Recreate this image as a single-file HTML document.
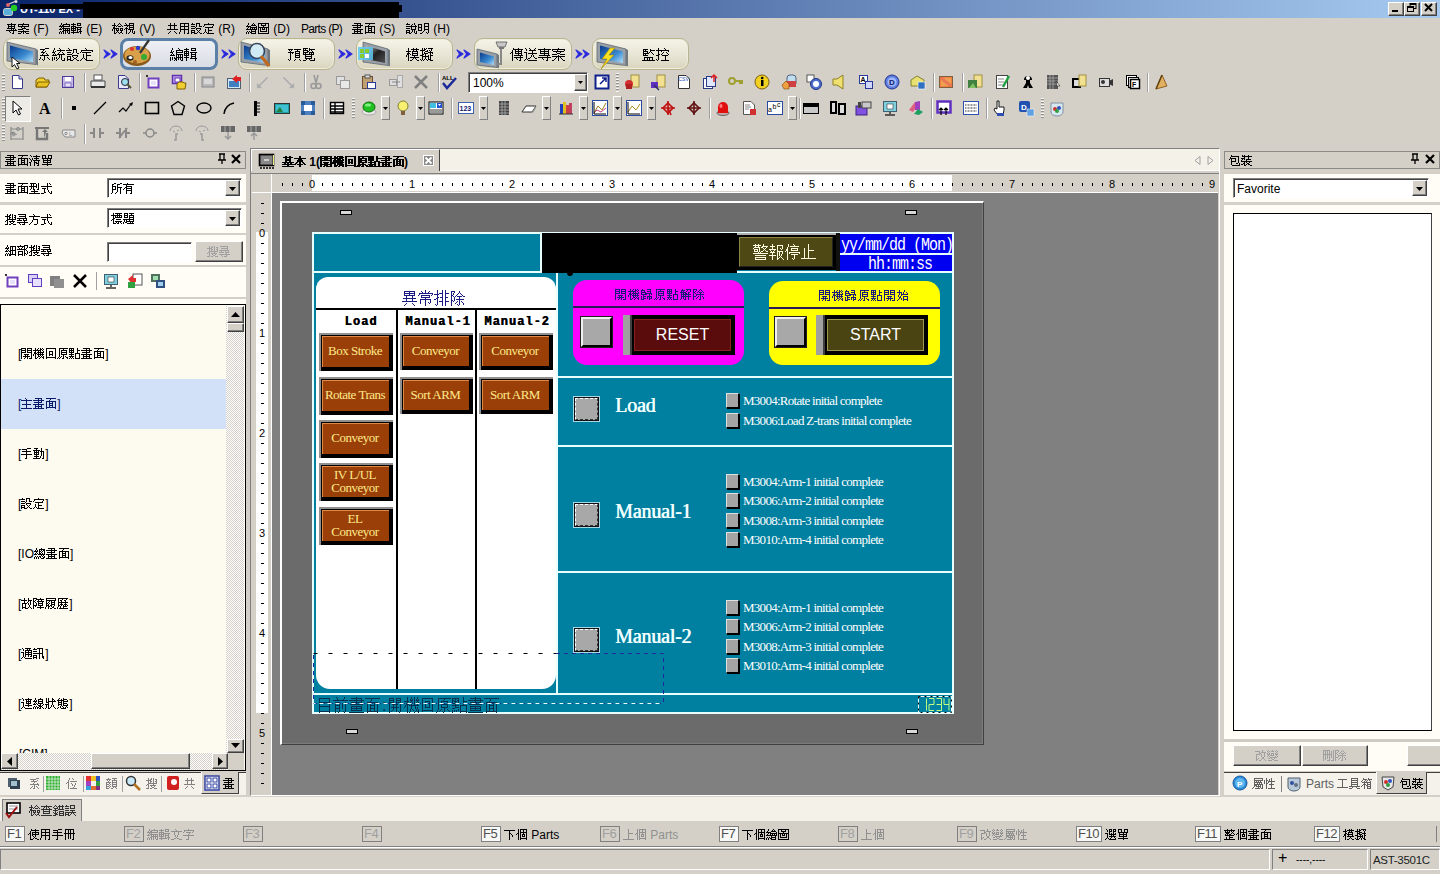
<!DOCTYPE html><html><head><meta charset="utf-8"><title>UT-110 EX</title><style>
html,body{margin:0;padding:0;}
body{width:1440px;height:874px;overflow:hidden;position:relative;background:#d4d0c8;font-family:"Liberation Sans",sans-serif;font-size:12px;color:#000;}
div{position:absolute;box-sizing:border-box;}
.t{white-space:nowrap;line-height:14px;}
svg{position:absolute;overflow:visible;}
svg.g{position:static;display:inline-block;vertical-align:0;fill:currentColor;overflow:visible;}
.h{fill:none;font-size:1px;}
</style></head><body>
<svg style="position:absolute;left:0;top:0;width:0;height:0;overflow:hidden"><defs><path id="g0" d="M5 2h1v1h-1zM1 3h9v1h-9zM2 4h1v1h-1zM5 4h1v1h-1zM8 4h1v1h-1zM2 5h7v1h-7zM2 6h1v1h-1zM5 6h1v1h-1zM8 6h1v1h-1zM1 7h8v1h-8zM5 8h1v1h-1zM7 8h1v1h-1zM9 8h1v1h-1zM0 9h11v1h-11zM3 10h1v1h-1zM4 11h1v1h-1zM7 10h1v2h-1zM6 12h2v1h-2z"/><path id="g1" d="M5 2h1v1h-1zM0 3h11v1h-11zM0 4h1v1h-1zM4 4h1v1h-1zM10 4h1v1h-1zM0 5h11v1h-11zM3 6h1v1h-1zM6 6h1v1h-1zM4 7h4v1h-4zM0 8h5v1h-5zM8 8h3v1h-3zM5 9h1v1h-1zM0 10h11v1h-11zM3 11h1v1h-1zM7 11h1v1h-1zM0 12h3v1h-3zM5 11h1v2h-1zM8 12h3v1h-3z"/><path id="g2" d="M7 2h1v1h-1zM2 2h1v2h-1zM4 3h7v1h-7zM1 4h1v1h-1zM3 4h2v1h-2zM10 4h1v1h-1zM0 5h11v1h-11zM2 6h1v1h-1zM4 6h1v1h-1zM1 7h1v1h-1zM3 7h8v1h-8zM0 8h3v1h-3zM4 8h1v1h-1zM6 8h1v1h-1zM8 8h1v1h-1zM10 8h1v1h-1zM4 9h7v1h-7zM1 10h1v1h-1zM3 10h2v1h-2zM8 10h1v2h-1zM10 10h1v2h-1zM0 11h1v2h-1zM2 11h1v2h-1zM4 11h1v2h-1zM6 10h1v3h-1zM9 12h2v1h-2z"/><path id="g3" d="M2 2h1v1h-1zM6 2h4v1h-4zM0 3h5v1h-5zM6 3h1v1h-1zM9 3h1v1h-1zM2 4h1v1h-1zM6 4h4v1h-4zM0 5h5v1h-5zM0 6h1v1h-1zM2 6h1v1h-1zM4 6h7v1h-7zM0 7h5v1h-5zM6 7h1v1h-1zM9 7h1v1h-1zM0 8h1v1h-1zM2 8h1v1h-1zM4 8h1v1h-1zM6 8h4v1h-4zM0 9h5v1h-5zM9 9h1v1h-1zM2 10h1v1h-1zM6 9h1v2h-1zM8 10h3v1h-3zM0 11h8v1h-8zM2 12h1v1h-1zM9 11h1v2h-1z"/><path id="g4" d="M7 2h1v1h-1zM2 2h1v2h-1zM6 3h1v1h-1zM8 3h1v1h-1zM0 4h4v1h-4zM5 4h1v1h-1zM9 4h1v1h-1zM2 5h1v1h-1zM4 5h1v1h-1zM6 5h3v1h-3zM10 5h1v1h-1zM1 6h2v1h-2zM1 7h6v1h-6zM8 7h3v1h-3zM4 8h1v1h-1zM6 8h1v1h-1zM8 8h1v1h-1zM10 8h1v1h-1zM0 8h1v2h-1zM4 9h3v1h-3zM8 9h3v1h-3zM5 10h1v1h-1zM9 10h1v1h-1zM2 8h1v4h-1zM4 11h1v1h-1zM6 11h1v1h-1zM8 11h2v1h-2zM2 12h2v1h-2zM7 12h1v1h-1zM10 12h1v1h-1z"/><path id="g5" d="M1 2h1v1h-1zM5 2h5v1h-5zM2 3h1v1h-1zM5 3h1v1h-1zM9 3h1v1h-1zM0 4h10v1h-10zM3 5h1v1h-1zM5 5h1v1h-1zM9 5h1v1h-1zM2 6h1v1h-1zM5 6h5v1h-5zM1 7h3v1h-3zM5 7h1v1h-1zM9 7h1v1h-1zM0 8h1v1h-1zM4 8h6v1h-6zM6 9h1v2h-1zM5 11h1v1h-1zM8 9h1v3h-1zM10 10h1v2h-1zM2 8h1v5h-1zM4 12h1v1h-1zM9 12h2v1h-2z"/><path id="g6" d="M3 2h1v2h-1zM7 2h1v2h-1zM1 4h9v1h-9zM3 5h1v3h-1zM7 5h1v3h-1zM0 8h11v1h-11zM3 10h1v1h-1zM7 10h1v1h-1zM2 11h1v1h-1zM8 11h1v1h-1zM1 12h1v1h-1zM9 12h1v1h-1z"/><path id="g7" d="M1 2h9v1h-9zM1 3h1v2h-1zM5 3h1v2h-1zM9 3h1v2h-1zM1 5h9v1h-9zM1 6h1v2h-1zM5 6h1v2h-1zM9 6h1v2h-1zM1 8h9v1h-9zM1 9h1v2h-1zM9 9h1v3h-1zM0 11h1v2h-1zM5 9h1v4h-1zM8 12h2v1h-2z"/><path id="g8" d="M1 2h1v1h-1zM5 2h4v1h-4zM0 3h4v1h-4zM8 3h1v2h-1zM0 5h4v1h-4zM5 3h1v3h-1zM8 5h3v1h-3zM4 6h1v1h-1zM0 7h4v1h-4zM5 7h5v1h-5zM5 8h1v1h-1zM9 8h1v1h-1zM0 9h4v1h-4zM6 9h1v1h-1zM8 9h1v1h-1zM0 10h1v1h-1zM3 10h1v1h-1zM7 10h1v1h-1zM0 11h4v1h-4zM6 11h1v1h-1zM8 11h1v1h-1zM0 12h1v1h-1zM3 12h3v1h-3zM9 12h2v1h-2z"/><path id="g9" d="M5 2h1v1h-1zM1 3h10v1h-10zM1 4h1v1h-1zM10 4h1v1h-1zM0 5h1v1h-1zM9 5h1v1h-1zM2 6h8v1h-8zM5 7h1v2h-1zM5 9h4v1h-4zM2 8h1v3h-1zM1 11h1v1h-1zM3 11h1v1h-1zM5 10h1v2h-1zM0 12h1v1h-1zM4 12h7v1h-7z"/><path id="g10" d="M7 2h1v1h-1zM2 2h1v2h-1zM6 3h1v1h-1zM8 3h1v1h-1zM1 4h1v1h-1zM5 4h5v1h-5zM0 5h5v1h-5zM10 5h1v1h-1zM2 6h1v1h-1zM4 6h7v1h-7zM1 7h1v1h-1zM4 7h1v1h-1zM6 7h1v1h-1zM8 7h1v1h-1zM10 7h1v1h-1zM0 8h11v1h-11zM5 9h1v1h-1zM9 9h1v1h-1zM1 10h1v1h-1zM3 10h1v1h-1zM5 10h5v1h-5zM4 11h2v1h-2zM9 11h1v1h-1zM0 11h1v2h-1zM2 11h1v2h-1zM5 12h5v1h-5z"/><path id="g11" d="M0 2h11v1h-11zM3 3h1v1h-1zM7 3h1v1h-1zM3 4h5v1h-5zM0 3h1v3h-1zM5 5h1v1h-1zM10 3h1v3h-1zM0 6h11v1h-11zM4 7h1v1h-1zM6 7h1v1h-1zM4 8h3v1h-3zM2 7h1v3h-1zM8 7h1v3h-1zM2 10h7v1h-7zM0 7h1v5h-1zM10 7h1v5h-1zM0 12h11v1h-11z"/><path id="g12" d="M2 2h7v1h-7zM5 3h1v1h-1zM8 3h1v1h-1zM0 4h11v1h-11zM5 5h1v1h-1zM8 5h1v1h-1zM1 6h8v1h-8zM5 7h1v1h-1zM0 8h11v1h-11zM2 9h1v1h-1zM5 9h1v1h-1zM8 9h1v1h-1zM2 10h7v1h-7zM2 11h1v1h-1zM5 11h1v1h-1zM8 11h1v1h-1zM0 12h11v1h-11z"/><path id="g13" d="M1 2h10v1h-10zM5 3h1v1h-1zM4 4h1v1h-1zM1 5h10v1h-10zM4 6h1v1h-1zM7 6h1v1h-1zM4 7h4v1h-4zM4 8h1v1h-1zM7 8h1v1h-1zM4 9h4v1h-4zM1 6h1v5h-1zM4 10h1v1h-1zM7 10h1v1h-1zM10 6h1v5h-1zM1 11h10v1h-10zM1 12h1v1h-1zM10 12h1v1h-1z"/><path id="g14" d="M1 2h1v1h-1zM0 3h4v1h-4zM6 3h1v1h-1zM8 2h1v2h-1zM5 4h1v1h-1zM9 4h1v1h-1zM0 5h11v1h-11zM0 7h4v1h-4zM5 6h1v2h-1zM9 6h1v2h-1zM5 8h5v1h-5zM0 9h4v1h-4zM0 10h1v1h-1zM3 10h1v1h-1zM6 9h1v2h-1zM0 11h4v1h-4zM5 11h1v1h-1zM8 9h1v3h-1zM10 10h1v2h-1zM0 12h1v1h-1zM3 12h2v1h-2zM9 12h2v1h-2z"/><path id="g15" d="M6 2h5v1h-5zM0 3h4v1h-4zM6 3h1v2h-1zM10 3h1v2h-1zM0 4h1v2h-1zM3 4h1v2h-1zM6 5h5v1h-5zM0 6h4v1h-4zM6 6h1v2h-1zM10 6h1v2h-1zM0 7h1v2h-1zM3 7h1v2h-1zM6 8h5v1h-5zM0 9h4v1h-4zM6 9h1v1h-1zM5 10h1v1h-1zM4 11h1v1h-1zM8 11h1v1h-1zM10 9h1v3h-1zM2 12h2v1h-2zM9 12h1v1h-1z"/><path id="g16" d="M7 2h4v1h-4zM2 3h5v1h-5zM5 4h1v1h-1zM4 5h1v1h-1zM7 5h1v1h-1zM3 6h4v1h-4zM5 7h1v1h-1zM8 7h1v1h-1zM4 8h1v1h-1zM9 8h1v1h-1zM2 9h9v1h-9zM9 11h1v1h-1zM2 11h1v2h-1zM10 12h1v1h-1zM1 13h1v1h-1zM4 13h1v1h-1zM6 10h1v4h-1zM11 13h1v1h-1zM5 14h1v1h-1z"/><path id="g17" d="M7 2h1v1h-1zM2 2h1v2h-1zM8 3h1v1h-1zM5 4h8v1h-8zM1 4h1v2h-1zM3 5h1v1h-1zM8 5h1v1h-1zM0 6h3v1h-3zM7 6h1v1h-1zM10 6h1v1h-1zM2 7h1v1h-1zM6 7h1v1h-1zM11 7h1v1h-1zM1 8h1v1h-1zM3 8h1v1h-1zM5 8h8v1h-8zM0 9h5v1h-5zM7 9h1v3h-1zM4 11h1v2h-1zM6 12h1v1h-1zM2 11h1v3h-1zM5 13h1v1h-1zM9 9h1v5h-1zM12 12h1v2h-1zM0 11h1v4h-1zM4 14h1v1h-1zM10 14h3v1h-3z"/><path id="g18" d="M2 2h1v1h-1zM3 3h1v1h-1zM7 3h4v1h-4zM0 4h6v1h-6zM1 6h4v1h-4zM7 4h1v3h-1zM10 4h1v3h-1zM6 7h1v1h-1zM11 7h2v1h-2zM1 8h5v1h-5zM6 9h6v1h-6zM1 10h4v1h-4zM6 10h1v1h-1zM11 10h1v1h-1zM7 11h1v1h-1zM10 11h1v1h-1zM1 11h1v2h-1zM4 11h1v2h-1zM8 12h2v1h-2zM1 13h4v1h-4zM7 13h1v1h-1zM10 13h1v1h-1zM1 14h1v1h-1zM4 14h3v1h-3zM11 14h2v1h-2z"/><path id="g19" d="M5 2h1v1h-1zM6 3h1v1h-1zM1 4h12v1h-12zM1 5h1v1h-1zM12 5h1v1h-1zM0 6h1v1h-1zM2 6h9v1h-9zM6 7h1v2h-1zM6 9h5v1h-5zM3 8h1v4h-1zM2 12h1v1h-1zM4 12h1v1h-1zM6 10h1v3h-1zM1 13h1v1h-1zM5 13h2v1h-2zM0 14h1v1h-1zM6 14h7v1h-7z"/><path id="g20" d="M8 2h1v1h-1zM2 2h1v2h-1zM9 3h1v1h-1zM6 4h7v1h-7zM1 4h1v2h-1zM3 5h1v1h-1zM6 5h1v1h-1zM12 5h1v1h-1zM0 6h3v1h-3zM6 6h7v1h-7zM2 7h1v1h-1zM6 7h1v1h-1zM1 8h1v1h-1zM3 8h1v1h-1zM6 8h7v1h-7zM0 9h5v1h-5zM6 9h1v2h-1zM8 9h1v2h-1zM10 9h1v2h-1zM12 9h1v2h-1zM4 11h1v1h-1zM6 11h7v1h-7zM4 12h3v1h-3zM2 11h1v3h-1zM5 13h2v1h-2zM8 12h1v2h-1zM10 12h1v2h-1zM12 12h1v2h-1zM0 11h1v4h-1zM4 14h1v1h-1zM6 14h1v1h-1zM11 14h2v1h-2z"/><path id="g21" d="M2 2h1v1h-1zM7 2h5v1h-5zM0 3h5v1h-5zM7 3h1v1h-1zM11 3h1v1h-1zM2 4h1v1h-1zM7 4h5v1h-5zM0 5h5v1h-5zM0 6h1v1h-1zM2 6h1v1h-1zM4 6h1v1h-1zM6 6h7v1h-7zM0 7h5v1h-5zM7 7h1v1h-1zM11 7h1v1h-1zM0 8h1v1h-1zM2 8h1v1h-1zM4 8h1v1h-1zM7 8h5v1h-5zM0 9h5v1h-5zM7 9h1v1h-1zM11 9h1v1h-1zM2 10h1v1h-1zM7 10h5v1h-5zM0 11h5v1h-5zM7 11h1v1h-1zM11 11h1v1h-1zM6 12h7v1h-7zM2 12h1v3h-1zM11 13h1v2h-1z"/><path id="g22" d="M0 3h5v1h-5zM6 3h7v1h-7zM1 4h1v1h-1zM3 4h1v1h-1zM9 4h1v1h-1zM2 5h1v1h-1zM7 5h5v1h-5zM0 6h6v1h-6zM7 6h1v1h-1zM11 6h1v1h-1zM4 7h1v1h-1zM7 7h5v1h-5zM7 8h1v1h-1zM11 8h1v1h-1zM7 9h5v1h-5zM7 10h1v1h-1zM11 10h1v1h-1zM7 11h5v1h-5zM0 13h1v1h-1zM2 7h1v7h-1zM7 13h1v1h-1zM11 13h1v1h-1zM1 14h1v1h-1zM6 14h1v1h-1zM12 14h1v1h-1z"/><path id="g23" d="M1 2h5v1h-5zM7 2h1v1h-1zM1 3h1v1h-1zM3 3h1v1h-1zM7 3h6v1h-6zM1 4h5v1h-5zM7 4h1v1h-1zM9 4h1v1h-1zM1 5h1v1h-1zM5 5h2v1h-2zM10 5h1v1h-1zM1 6h5v1h-5zM7 6h5v1h-5zM1 7h1v1h-1zM3 7h1v1h-1zM7 7h1v1h-1zM9 7h1v1h-1zM11 7h1v1h-1zM1 8h11v1h-11zM3 9h1v1h-1zM9 9h1v1h-1zM3 10h7v1h-7zM3 11h1v1h-1zM9 11h1v1h-1zM3 12h7v1h-7zM4 13h1v1h-1zM7 13h1v1h-1zM12 12h1v2h-1zM1 14h3v1h-3zM8 14h5v1h-5z"/><path id="g24" d="M7 2h1v1h-1zM10 2h1v1h-1zM5 3h8v1h-8zM2 2h1v3h-1zM7 4h1v1h-1zM10 4h1v1h-1zM0 5h5v1h-5zM6 5h6v1h-6zM2 6h1v1h-1zM6 6h1v1h-1zM11 6h1v1h-1zM1 7h3v1h-3zM6 7h6v1h-6zM1 8h2v1h-2zM4 8h1v1h-1zM6 8h1v1h-1zM11 8h1v1h-1zM6 9h6v1h-6zM0 9h1v2h-1zM8 10h1v1h-1zM4 11h9v1h-9zM7 12h1v1h-1zM9 12h1v1h-1zM6 13h1v1h-1zM10 13h1v1h-1zM2 9h1v6h-1zM4 14h2v1h-2zM11 14h2v1h-2z"/><path id="g25" d="M4 2h1v1h-1zM6 2h1v1h-1zM8 2h5v1h-5zM2 2h1v2h-1zM4 3h2v1h-2zM0 4h5v1h-5zM7 4h1v1h-1zM9 4h1v1h-1zM11 3h1v2h-1zM5 5h3v1h-3zM10 5h1v1h-1zM4 6h1v1h-1zM8 6h5v1h-5zM2 5h1v3h-1zM4 7h4v1h-4zM12 7h1v1h-1zM2 8h2v1h-2zM10 7h1v2h-1zM0 9h3v1h-3zM5 8h1v2h-1zM8 9h1v1h-1zM10 9h3v1h-3zM2 10h7v1h-7zM5 11h1v2h-1zM8 11h1v2h-1zM10 10h1v3h-1zM0 13h1v1h-1zM2 11h1v3h-1zM4 13h1v1h-1zM6 13h1v1h-1zM8 13h3v1h-3zM1 14h1v1h-1zM3 14h1v1h-1zM7 14h1v1h-1zM10 14h3v1h-3z"/><path id="g26" d="M3 2h1v1h-1zM8 2h1v1h-1zM3 3h10v1h-10zM5 4h1v1h-1zM8 4h1v1h-1zM11 4h1v1h-1zM2 4h1v2h-1zM5 5h7v1h-7zM1 6h2v1h-2zM5 6h1v1h-1zM8 6h1v1h-1zM11 6h1v1h-1zM0 7h1v1h-1zM5 7h7v1h-7zM8 8h1v1h-1zM11 8h1v1h-1zM4 9h9v1h-9zM10 10h1v1h-1zM4 11h9v1h-9zM6 12h1v1h-1zM7 13h1v1h-1zM10 12h1v2h-1zM2 7h1v8h-1zM9 14h2v1h-2z"/><path id="g27" d="M1 2h1v1h-1zM5 2h1v1h-1zM11 2h1v1h-1zM6 3h1v1h-1zM10 3h1v1h-1zM2 3h1v2h-1zM5 4h7v1h-7zM0 6h3v1h-3zM8 5h1v2h-1zM4 7h9v1h-9zM8 8h1v1h-1zM7 9h1v2h-1zM9 9h1v2h-1zM6 11h1v1h-1zM10 11h1v1h-1zM2 7h1v6h-1zM4 12h2v1h-2zM11 12h2v1h-2zM1 13h1v1h-1zM3 13h1v1h-1zM0 14h1v1h-1zM4 14h9v1h-9z"/><path id="g28" d="M6 2h1v1h-1zM0 3h13v1h-13zM2 4h1v1h-1zM6 4h1v1h-1zM10 4h1v1h-1zM2 5h9v1h-9zM2 6h1v1h-1zM6 6h1v1h-1zM10 6h1v1h-1zM2 7h9v1h-9zM6 8h1v1h-1zM10 8h1v1h-1zM1 9h11v1h-11zM9 10h1v1h-1zM0 11h13v1h-13zM4 12h1v1h-1zM5 13h1v1h-1zM9 12h1v2h-1zM8 14h2v1h-2z"/><path id="g29" d="M6 2h1v1h-1zM0 3h13v1h-13zM0 4h1v1h-1zM5 4h1v1h-1zM12 4h1v1h-1zM1 5h11v1h-11zM4 6h1v1h-1zM8 6h1v1h-1zM5 7h3v1h-3zM0 8h5v1h-5zM8 8h5v1h-5zM6 9h1v1h-1zM0 10h13v1h-13zM4 11h1v1h-1zM8 11h1v1h-1zM3 12h1v1h-1zM9 12h1v1h-1zM2 13h1v1h-1zM10 13h1v1h-1zM0 14h2v1h-2zM6 11h1v4h-1zM11 14h2v1h-2z"/><path id="g30" d="M1 3h5v1h-5zM8 3h1v1h-1zM1 4h1v1h-1zM3 4h1v1h-1zM8 4h5v1h-5zM1 5h5v1h-5zM8 5h1v1h-1zM1 6h1v1h-1zM5 6h1v1h-1zM7 6h1v1h-1zM9 6h1v1h-1zM1 7h6v1h-6zM10 7h1v1h-1zM1 8h1v1h-1zM3 8h1v1h-1zM11 8h1v1h-1zM1 9h5v1h-5zM2 11h9v1h-9zM2 12h1v2h-1zM5 12h1v2h-1zM7 12h1v2h-1zM10 12h1v2h-1zM0 14h13v1h-13z"/><path id="g31" d="M8 2h1v1h-1zM2 2h1v2h-1zM9 3h1v1h-1zM0 4h13v1h-13zM5 5h1v1h-1zM12 5h1v1h-1zM7 6h1v1h-1zM10 6h1v1h-1zM2 5h1v3h-1zM6 7h1v1h-1zM11 7h1v1h-1zM2 8h2v1h-2zM5 8h1v1h-1zM12 8h1v1h-1zM0 9h3v1h-3zM6 9h6v1h-6zM0 13h1v1h-1zM2 10h1v4h-1zM9 10h1v4h-1zM1 14h1v1h-1zM5 14h8v1h-8z"/><path id="g32" d="M1 2h1v1h-1zM7 2h1v1h-1zM2 3h1v1h-1zM4 3h7v1h-7zM7 4h1v1h-1zM0 5h1v1h-1zM5 5h5v1h-5zM1 6h1v1h-1zM3 5h1v2h-1zM7 6h1v1h-1zM4 7h7v1h-7zM2 7h1v2h-1zM5 8h1v1h-1zM0 9h2v1h-2zM5 9h3v1h-3zM9 8h1v2h-1zM7 10h3v1h-3zM9 11h1v1h-1zM1 10h1v3h-1zM5 10h1v3h-1zM8 12h2v1h-2z"/><path id="g33" d="M1 2h4v1h-4zM7 2h4v1h-4zM1 3h1v2h-1zM4 3h1v2h-1zM7 3h1v2h-1zM10 3h1v2h-1zM1 5h10v1h-10zM2 6h1v1h-1zM6 6h1v1h-1zM9 6h1v1h-1zM2 7h8v1h-8zM2 8h1v1h-1zM6 8h1v1h-1zM9 8h1v1h-1zM2 9h8v1h-8zM6 10h1v1h-1zM1 11h10v1h-10zM6 12h1v1h-1z"/><path id="g34" d="M1 2h6v1h-6zM2 3h1v2h-1zM4 3h1v2h-1zM7 3h1v2h-1zM0 5h8v1h-8zM7 6h1v1h-1zM2 6h1v2h-1zM4 6h1v2h-1zM9 2h1v6h-1zM1 8h1v1h-1zM4 8h2v1h-2zM8 8h2v1h-2zM5 9h1v1h-1zM2 10h7v1h-7zM5 11h1v1h-1zM0 12h11v1h-11z"/><path id="g35" d="M8 2h1v1h-1zM9 3h1v1h-1zM6 2h1v3h-1zM0 5h11v1h-11zM1 7h4v1h-4zM6 6h1v3h-1zM3 8h1v3h-1zM7 9h1v2h-1zM3 11h2v1h-2zM8 11h1v1h-1zM10 10h1v2h-1zM0 12h3v1h-3zM9 12h2v1h-2z"/><path id="g36" d="M5 2h1v1h-1zM2 2h1v2h-1zM4 3h2v1h-2zM9 3h2v1h-2zM0 4h5v1h-5zM10 4h1v1h-1zM4 5h2v1h-2zM9 5h2v1h-2zM2 5h1v2h-1zM4 6h1v1h-1zM7 2h1v5h-1zM10 6h1v1h-1zM2 7h9v1h-9zM1 8h2v1h-2zM7 8h1v1h-1zM0 9h1v1h-1zM4 9h6v1h-6zM5 10h1v1h-1zM8 10h1v1h-1zM2 9h1v3h-1zM6 11h2v1h-2zM0 12h3v1h-3zM4 12h2v1h-2zM8 12h3v1h-3z"/><path id="g37" d="M1 2h8v1h-8zM8 3h1v1h-1zM2 4h7v1h-7zM8 5h1v1h-1zM0 6h10v1h-10zM2 7h1v1h-1zM6 7h1v1h-1zM9 7h1v1h-1zM0 8h5v1h-5zM6 8h4v1h-4zM7 9h1v1h-1zM0 10h11v1h-11zM2 11h1v1h-1zM7 11h1v1h-1zM3 12h1v1h-1zM5 12h3v1h-3z"/><path id="g38" d="M4 2h1v1h-1zM5 3h1v1h-1zM0 4h11v1h-11zM4 5h1v2h-1zM4 7h5v1h-5zM3 8h1v2h-1zM2 10h1v1h-1zM1 11h1v1h-1zM8 8h1v4h-1zM0 12h1v1h-1zM5 12h3v1h-3z"/><path id="g39" d="M2 2h1v2h-1zM5 3h6v1h-6zM1 4h1v1h-1zM3 4h1v1h-1zM0 5h4v1h-4zM2 6h1v1h-1zM5 4h1v3h-1zM7 4h1v3h-1zM10 4h1v3h-1zM1 7h1v1h-1zM3 7h1v1h-1zM5 7h6v1h-6zM0 8h3v1h-3zM4 8h2v1h-2zM1 10h1v1h-1zM3 10h1v1h-1zM5 9h1v2h-1zM7 8h1v3h-1zM10 8h1v3h-1zM4 11h7v1h-7zM0 11h1v2h-1zM2 11h1v2h-1zM4 12h2v1h-2zM10 12h1v1h-1z"/><path id="g40" d="M3 2h1v1h-1zM7 2h4v1h-4zM0 3h8v1h-8zM1 4h1v1h-1zM5 4h1v1h-1zM10 3h1v2h-1zM2 5h1v1h-1zM4 5h1v1h-1zM7 4h1v2h-1zM9 5h1v1h-1zM0 6h9v1h-9zM9 7h1v1h-1zM1 8h5v1h-5zM7 7h1v3h-1zM1 9h1v2h-1zM5 9h1v2h-1zM7 10h2v1h-2zM10 8h1v3h-1zM1 11h5v1h-5zM9 11h1v1h-1zM1 12h1v1h-1zM5 12h1v1h-1zM7 11h1v2h-1z"/><path id="g41" d="M3 2h2v1h-2zM9 2h2v1h-2zM1 3h2v1h-2zM6 3h3v1h-3zM1 4h1v1h-1zM1 5h4v1h-4zM6 4h1v2h-1zM6 6h5v1h-5zM1 6h1v2h-1zM4 6h1v2h-1zM1 8h4v1h-4zM6 7h1v4h-1zM1 9h1v3h-1zM5 11h1v1h-1zM0 12h1v1h-1zM4 12h1v1h-1zM9 7h1v6h-1z"/><path id="g42" d="M4 2h1v1h-1zM0 3h11v1h-11zM3 4h1v1h-1zM3 5h6v1h-6zM2 6h2v1h-2zM8 6h1v1h-1zM1 7h1v1h-1zM3 7h6v1h-6zM0 8h1v1h-1zM3 8h1v1h-1zM8 8h1v1h-1zM3 9h6v1h-6zM8 10h1v2h-1zM3 10h1v3h-1zM7 12h2v1h-2z"/><path id="g43" d="M4 2h7v1h-7zM2 2h1v2h-1zM6 3h1v1h-1zM8 3h1v1h-1zM0 4h11v1h-11zM4 5h1v1h-1zM6 5h1v1h-1zM8 5h1v1h-1zM10 5h1v1h-1zM2 5h1v2h-1zM4 6h7v1h-7zM2 7h2v1h-2zM1 8h2v1h-2zM5 8h5v1h-5zM0 9h1v1h-1zM4 10h7v1h-7zM2 9h1v3h-1zM5 11h1v1h-1zM7 11h1v1h-1zM9 11h1v1h-1zM2 12h3v1h-3zM6 12h2v1h-2zM10 12h1v1h-1z"/><path id="g44" d="M1 2h4v1h-4zM6 2h5v1h-5zM1 3h1v1h-1zM4 3h1v1h-1zM8 3h1v1h-1zM1 4h4v1h-4zM6 4h5v1h-5zM1 5h1v1h-1zM4 5h1v1h-1zM6 5h1v1h-1zM10 5h1v1h-1zM1 6h4v1h-4zM6 6h5v1h-5zM6 7h1v1h-1zM10 7h1v1h-1zM0 8h11v1h-11zM3 9h1v1h-1zM6 9h1v1h-1zM10 9h1v1h-1zM1 9h1v2h-1zM3 10h8v1h-8zM2 11h2v1h-2zM7 11h1v1h-1zM9 11h1v1h-1zM0 11h1v2h-1zM4 12h7v1h-7z"/><path id="g45" d="M0 2h5v1h-5zM6 2h5v1h-5zM0 3h1v1h-1zM4 3h1v1h-1zM6 3h1v1h-1zM10 3h1v1h-1zM0 4h5v1h-5zM6 4h5v1h-5zM0 5h1v1h-1zM4 5h1v1h-1zM6 5h1v1h-1zM10 5h1v1h-1zM0 6h5v1h-5zM6 6h5v1h-5zM3 8h5v1h-5zM4 9h1v1h-1zM6 9h1v1h-1zM2 10h7v1h-7zM4 11h1v1h-1zM10 7h1v5h-1zM0 7h1v6h-1zM3 12h1v1h-1zM6 11h1v2h-1zM8 12h3v1h-3z"/><path id="g46" d="M5 2h1v1h-1zM7 2h1v1h-1zM9 2h1v1h-1zM2 2h1v2h-1zM4 3h1v1h-1zM7 3h2v1h-2zM10 3h1v1h-1zM0 4h8v1h-8zM9 4h1v1h-1zM2 5h1v1h-1zM5 5h1v1h-1zM7 5h1v1h-1zM10 5h1v1h-1zM1 6h2v1h-2zM4 6h7v1h-7zM1 7h3v1h-3zM5 7h1v1h-1zM7 7h1v1h-1zM9 7h1v1h-1zM4 8h7v1h-7zM0 8h1v2h-1zM5 9h1v1h-1zM7 9h1v1h-1zM9 9h1v1h-1zM5 10h2v1h-2zM8 10h1v1h-1zM10 10h1v1h-1zM2 8h1v4h-1zM4 11h1v1h-1zM7 11h1v1h-1zM9 11h2v1h-2zM2 12h2v1h-2zM6 12h1v1h-1zM10 12h1v1h-1z"/><path id="g47" d="M1 2h10v1h-10zM4 5h4v1h-4zM4 6h1v2h-1zM7 6h1v2h-1zM4 8h4v1h-4zM4 9h1v1h-1zM7 9h1v1h-1zM1 3h1v8h-1zM10 3h1v8h-1zM1 11h10v1h-10zM1 12h1v1h-1zM10 12h1v1h-1z"/><path id="g48" d="M2 2h9v1h-9zM6 3h1v1h-1zM4 4h6v1h-6zM4 5h1v1h-1zM9 5h1v1h-1zM4 6h6v1h-6zM4 7h1v1h-1zM9 7h1v1h-1zM4 8h6v1h-6zM2 3h1v8h-1zM4 10h1v1h-1zM8 10h1v1h-1zM1 11h1v1h-1zM3 11h1v1h-1zM6 9h1v3h-1zM9 11h2v1h-2zM0 12h1v1h-1zM2 12h1v1h-1zM5 12h2v1h-2zM10 12h1v1h-1z"/><path id="g49" d="M0 2h5v1h-5zM0 3h1v1h-1zM2 3h1v1h-1zM4 3h1v1h-1zM8 2h1v2h-1zM0 4h5v1h-5zM8 4h3v1h-3zM0 5h1v1h-1zM2 5h1v1h-1zM4 5h1v1h-1zM0 6h5v1h-5zM8 5h1v2h-1zM2 7h1v1h-1zM6 7h5v1h-5zM0 8h5v1h-5zM2 9h1v1h-1zM0 10h5v1h-5zM1 11h1v1h-1zM3 11h1v1h-1zM6 8h1v4h-1zM10 8h1v4h-1zM0 12h1v1h-1zM2 12h1v1h-1zM4 12h1v1h-1zM6 12h5v1h-5z"/><path id="g50" d="M4 2h1v1h-1zM5 3h1v1h-1zM0 4h11v1h-11zM5 5h1v3h-1zM1 8h9v1h-9zM5 9h1v3h-1zM0 12h11v1h-11z"/><path id="g51" d="M6 2h4v1h-4zM1 3h5v1h-5zM5 4h1v1h-1zM1 5h9v1h-9zM5 6h1v2h-1zM0 8h11v1h-11zM5 9h1v3h-1zM4 12h2v1h-2z"/><path id="g52" d="M1 2h4v1h-4zM3 3h1v1h-1zM0 4h7v1h-7zM8 2h1v3h-1zM1 5h1v1h-1zM3 5h1v1h-1zM5 5h1v1h-1zM7 5h4v1h-4zM1 6h5v1h-5zM1 7h1v1h-1zM3 7h1v1h-1zM5 7h1v1h-1zM1 8h5v1h-5zM3 9h1v1h-1zM8 6h1v4h-1zM1 10h5v1h-5zM3 11h1v1h-1zM7 10h1v2h-1zM10 6h1v6h-1zM0 12h7v1h-7zM9 12h2v1h-2z"/><path id="g53" d="M7 2h1v1h-1zM2 2h1v2h-1zM5 3h6v1h-6zM1 4h1v1h-1zM3 4h1v1h-1zM5 4h1v1h-1zM7 4h1v1h-1zM9 4h2v1h-2zM0 5h4v1h-4zM5 5h2v1h-2zM8 5h1v1h-1zM2 6h1v1h-1zM5 6h1v1h-1zM7 6h1v1h-1zM1 7h1v1h-1zM3 7h1v1h-1zM5 7h2v1h-2zM8 7h1v1h-1zM10 5h1v3h-1zM0 8h3v1h-3zM4 8h7v1h-7zM7 9h1v1h-1zM9 9h1v1h-1zM1 10h1v1h-1zM3 10h1v1h-1zM5 10h2v1h-2zM8 10h1v1h-1zM10 10h1v1h-1zM6 11h1v1h-1zM9 11h2v1h-2zM0 11h1v2h-1zM2 11h1v2h-1zM4 11h1v2h-1zM7 12h3v1h-3z"/><path id="g54" d="M3 2h1v2h-1zM7 2h1v2h-1zM0 4h6v1h-6zM7 4h4v1h-4zM7 5h1v1h-1zM3 5h1v2h-1zM6 6h1v1h-1zM1 7h5v1h-5zM7 7h1v2h-1zM9 5h1v4h-1zM1 8h1v3h-1zM4 8h1v3h-1zM8 9h1v2h-1zM1 11h4v1h-4zM7 11h1v1h-1zM9 11h1v1h-1zM1 12h1v1h-1zM4 12h3v1h-3zM10 12h1v1h-1z"/><path id="g55" d="M0 2h4v1h-4zM7 2h1v1h-1zM3 3h8v1h-8zM0 3h1v2h-1zM2 4h1v1h-1zM5 4h1v1h-1zM8 4h1v1h-1zM0 5h2v1h-2zM4 5h7v1h-7zM2 6h1v1h-1zM5 6h1v1h-1zM9 6h1v1h-1zM5 7h5v1h-5zM0 6h1v3h-1zM3 7h1v2h-1zM5 8h1v1h-1zM9 8h1v1h-1zM0 9h4v1h-4zM5 9h5v1h-5zM2 10h1v1h-1zM7 10h1v1h-1zM4 11h7v1h-7zM0 10h1v3h-1zM7 12h1v1h-1z"/><path id="g56" d="M1 2h10v1h-10zM1 3h1v1h-1zM10 3h1v1h-1zM1 4h10v1h-10zM4 5h1v1h-1zM6 5h1v1h-1zM9 5h1v1h-1zM1 5h1v2h-1zM3 6h1v1h-1zM6 6h4v1h-4zM1 7h2v1h-2zM4 7h1v1h-1zM6 7h1v1h-1zM9 7h1v1h-1zM1 8h1v1h-1zM3 8h1v1h-1zM6 8h4v1h-4zM1 9h3v1h-3zM5 9h2v1h-2zM9 9h1v1h-1zM1 10h1v1h-1zM3 10h2v1h-2zM6 10h1v1h-1zM8 10h1v1h-1zM7 11h2v1h-2zM0 11h1v2h-1zM3 11h1v2h-1zM5 12h2v1h-2zM9 12h2v1h-2z"/><path id="g57" d="M1 2h10v1h-10zM5 3h1v1h-1zM9 3h1v1h-1zM3 4h2v1h-2zM7 4h2v1h-2zM1 3h1v3h-1zM4 5h1v1h-1zM8 5h1v1h-1zM1 6h10v1h-10zM4 7h1v1h-1zM8 7h1v1h-1zM1 7h1v2h-1zM3 8h3v1h-3zM7 8h3v1h-3zM1 9h2v1h-2zM4 9h1v1h-1zM6 9h1v1h-1zM8 9h1v1h-1zM10 9h1v1h-1zM1 10h1v1h-1zM6 10h4v1h-4zM3 10h1v2h-1zM6 11h1v1h-1zM0 11h1v2h-1zM2 12h9v1h-9z"/><path id="g58" d="M1 2h1v1h-1zM4 2h6v1h-6zM6 3h1v1h-1zM8 3h1v1h-1zM2 3h1v2h-1zM4 4h7v1h-7zM4 5h1v1h-1zM7 5h1v1h-1zM10 5h1v1h-1zM0 6h3v1h-3zM4 6h7v1h-7zM4 7h1v1h-1zM7 7h1v1h-1zM10 7h1v1h-1zM4 8h7v1h-7zM10 9h1v1h-1zM2 7h1v4h-1zM4 9h1v2h-1zM7 9h1v2h-1zM9 10h2v1h-2zM1 11h1v1h-1zM3 11h1v1h-1zM0 12h1v1h-1zM4 12h7v1h-7z"/><path id="g59" d="M1 2h1v1h-1zM4 2h6v1h-6zM0 3h4v1h-4zM0 5h4v1h-4zM6 3h1v4h-1zM9 3h1v4h-1zM0 7h10v1h-10zM0 9h4v1h-4zM9 8h1v2h-1zM0 10h1v1h-1zM3 10h1v1h-1zM0 11h4v1h-4zM9 10h2v2h-2zM0 12h1v1h-1zM3 12h1v1h-1zM6 8h1v5h-1zM10 12h1v1h-1z"/><path id="g60" d="M1 2h1v1h-1zM7 2h1v1h-1zM4 3h7v1h-7zM2 3h1v2h-1zM5 4h1v1h-1zM7 4h1v1h-1zM9 4h1v1h-1zM5 5h5v1h-5zM0 6h3v1h-3zM5 6h1v1h-1zM7 6h1v1h-1zM9 6h1v1h-1zM5 7h5v1h-5zM7 8h1v1h-1zM4 9h7v1h-7zM2 7h1v4h-1zM7 10h1v1h-1zM1 11h1v1h-1zM3 11h1v1h-1zM0 12h1v1h-1zM4 12h7v1h-7z"/><path id="g61" d="M7 2h1v1h-1zM2 2h1v2h-1zM5 3h5v1h-5zM1 4h1v1h-1zM3 4h1v1h-1zM5 4h1v1h-1zM9 4h1v1h-1zM0 5h4v1h-4zM5 5h5v1h-5zM2 6h1v1h-1zM5 6h1v1h-1zM9 6h1v1h-1zM1 7h1v1h-1zM3 7h1v1h-1zM5 7h5v1h-5zM0 8h3v1h-3zM4 8h1v1h-1zM7 8h1v1h-1zM10 8h1v1h-1zM5 9h3v1h-3zM9 9h1v1h-1zM1 10h1v1h-1zM3 10h1v1h-1zM6 10h3v1h-3zM4 11h2v1h-2zM7 11h1v1h-1zM9 11h1v1h-1zM0 11h1v2h-1zM2 11h1v2h-1zM4 12h1v1h-1zM6 12h2v1h-2zM10 12h1v1h-1z"/><path id="g62" d="M7 2h1v1h-1zM7 3h2v1h-2zM3 2h1v3h-1zM7 4h1v1h-1zM9 4h1v1h-1zM1 2h1v4h-1zM3 5h8v1h-8zM1 6h3v1h-3zM3 7h1v1h-1zM0 8h4v1h-4zM7 6h1v3h-1zM6 9h1v2h-1zM8 9h1v2h-1zM1 9h1v3h-1zM3 9h1v3h-1zM5 11h1v1h-1zM9 11h1v1h-1zM0 12h1v1h-1zM3 12h2v1h-2zM10 12h1v1h-1z"/><path id="g63" d="M2 2h1v1h-1zM6 2h1v1h-1zM1 3h1v1h-1zM4 3h1v1h-1zM6 3h4v1h-4zM0 4h7v1h-7zM10 4h1v1h-1zM1 5h1v1h-1zM4 5h1v1h-1zM6 5h5v1h-5zM1 6h4v1h-4zM6 6h1v1h-1zM1 7h1v1h-1zM4 7h1v1h-1zM6 7h4v1h-4zM1 8h4v1h-4zM6 8h1v1h-1zM10 8h1v1h-1zM1 9h1v1h-1zM4 9h1v1h-1zM6 9h5v1h-5zM5 10h1v1h-1zM9 10h1v1h-1zM1 11h1v1h-1zM3 10h1v2h-1zM6 11h1v1h-1zM8 11h1v1h-1zM10 11h1v1h-1zM0 12h1v1h-1zM4 12h5v1h-5z"/><path id="g64" d="M7 2h3v1h-3zM1 3h6v1h-6zM4 4h1v1h-1zM8 4h1v1h-1zM2 5h6v1h-6zM5 6h1v1h-1zM4 7h1v1h-1zM8 7h1v1h-1zM1 8h9v1h-9zM9 9h1v1h-1zM3 10h1v1h-1zM7 10h1v1h-1zM2 11h1v1h-1zM5 9h1v3h-1zM8 11h1v1h-1zM1 12h1v1h-1zM4 12h2v1h-2zM9 12h1v1h-1z"/><path id="g65" d="M6 2h1v1h-1zM3 2h1v2h-1zM7 3h1v1h-1zM2 4h1v2h-1zM4 5h7v1h-7zM1 6h2v1h-2zM0 7h1v1h-1zM5 7h1v1h-1zM9 7h1v2h-1zM6 8h1v2h-1zM8 9h1v2h-1zM7 11h1v1h-1zM2 7h1v6h-1zM4 12h7v1h-7z"/><path id="g66" d="M2 2h1v1h-1zM6 2h5v1h-5zM0 3h5v1h-5zM8 3h1v1h-1zM1 4h1v1h-1zM3 4h1v1h-1zM6 4h5v1h-5zM2 5h1v1h-1zM6 5h1v1h-1zM10 5h1v1h-1zM0 6h5v1h-5zM6 6h5v1h-5zM0 7h1v1h-1zM3 7h1v1h-1zM6 7h1v1h-1zM10 7h1v1h-1zM0 8h3v1h-3zM4 8h1v1h-1zM6 8h5v1h-5zM0 9h1v1h-1zM3 9h1v1h-1zM6 9h1v1h-1zM10 9h1v1h-1zM0 10h3v1h-3zM4 10h1v1h-1zM6 10h5v1h-5zM0 11h1v1h-1zM3 11h1v1h-1zM7 11h1v1h-1zM9 11h1v1h-1zM0 12h3v1h-3zM5 12h2v1h-2zM10 12h1v1h-1z"/><path id="g67" d="M3 2h2v1h-2zM7 2h2v1h-2zM1 3h10v1h-10zM3 4h2v1h-2zM7 4h2v1h-2zM3 5h6v2h-6zM3 7h2v1h-2zM7 7h2v1h-2zM0 8h12v1h-12zM2 9h2v1h-2zM5 9h2v1h-2zM8 9h2v1h-2zM0 10h12v1h-12zM5 11h2v1h-2zM0 12h12v1h-12z"/><path id="g68" d="M5 2h2v2h-2zM0 4h12v1h-12zM4 5h4v1h-4zM3 6h6v2h-6zM2 8h2v1h-2zM8 8h2v1h-2zM1 9h2v1h-2zM5 8h2v2h-2zM9 9h2v1h-2zM0 10h2v1h-2zM3 10h6v1h-6zM10 10h2v1h-2zM5 11h2v2h-2z"/><path id="g69" d="M0 2h12v1h-12zM0 3h2v1h-2zM4 3h4v1h-4zM10 3h2v1h-2zM0 4h12v1h-12zM0 5h2v1h-2zM4 5h4v1h-4zM10 5h2v1h-2zM0 6h12v1h-12zM3 8h6v1h-6zM0 7h2v3h-2zM4 9h4v1h-4zM10 7h2v3h-2zM0 10h12v1h-12zM4 11h4v1h-4zM10 11h2v1h-2zM0 11h2v2h-2zM3 12h2v1h-2zM6 12h6v1h-6z"/><path id="g70" d="M2 2h2v1h-2zM5 2h6v1h-6zM2 3h4v1h-4zM7 3h5v1h-5zM0 4h11v1h-11zM2 5h2v1h-2zM5 5h4v1h-4zM10 5h2v1h-2zM1 6h11v1h-11zM1 7h10v1h-10zM0 8h12v1h-12zM0 9h4v1h-4zM5 9h6v1h-6zM2 10h2v1h-2zM5 10h7v1h-7zM2 11h4v1h-4zM7 11h5v1h-5zM2 12h3v1h-3zM6 12h2v1h-2zM10 12h2v1h-2z"/><path id="g71" d="M1 2h11v1h-11zM4 5h5v1h-5zM4 6h2v2h-2zM7 6h2v2h-2zM4 8h5v1h-5zM4 9h2v1h-2zM7 9h2v1h-2zM1 3h2v8h-2zM10 3h2v8h-2zM1 11h11v1h-11zM1 12h2v1h-2zM10 12h2v1h-2z"/><path id="g72" d="M2 2h10v1h-10zM2 3h2v1h-2zM6 3h2v1h-2zM2 4h9v1h-9zM2 5h4v1h-4zM9 5h2v1h-2zM2 6h9v1h-9zM2 7h4v1h-4zM9 7h2v1h-2zM2 8h9v1h-9zM2 9h2v1h-2zM6 9h2v1h-2zM2 10h8v1h-8zM1 11h4v1h-4zM6 11h2v1h-2zM9 11h3v1h-3zM0 12h4v1h-4zM5 12h3v1h-3zM10 12h2v1h-2z"/><path id="g73" d="M8 2h2v2h-2zM8 4h4v1h-4zM0 2h6v5h-6zM8 5h2v2h-2zM2 7h2v1h-2zM6 7h6v1h-6zM0 8h8v1h-8zM2 9h2v1h-2zM6 9h2v1h-2zM0 10h8v1h-8zM1 11h4v1h-4zM6 11h2v1h-2zM10 8h2v4h-2zM0 12h12v1h-12z"/><path id="g74" d="M2 2h8v1h-8zM5 3h2v1h-2zM8 3h2v1h-2zM0 4h12v1h-12zM5 5h2v1h-2zM8 5h2v1h-2zM1 6h9v1h-9zM5 7h2v1h-2zM0 8h12v1h-12zM2 9h2v1h-2zM5 9h2v1h-2zM8 9h2v1h-2zM2 10h8v1h-8zM2 11h2v1h-2zM5 11h2v1h-2zM8 11h2v1h-2zM0 12h12v1h-12z"/><path id="g75" d="M1 2h11v1h-11zM5 3h2v1h-2zM4 4h2v1h-2zM1 5h11v1h-11zM4 6h2v1h-2zM7 6h2v1h-2zM4 7h5v1h-5zM4 8h2v1h-2zM7 8h2v1h-2zM4 9h5v1h-5zM1 6h2v5h-2zM4 10h2v1h-2zM7 10h2v1h-2zM10 6h2v5h-2zM1 11h11v1h-11zM1 12h2v1h-2zM10 12h2v1h-2z"/><path id="g76" d="M2 2h1v1h-1zM5 2h1v1h-1zM0 3h8v1h-8zM10 2h1v2h-1zM2 4h1v1h-1zM5 4h1v1h-1zM9 4h6v1h-6zM1 5h6v1h-6zM8 5h2v1h-2zM13 5h1v1h-1zM0 6h1v1h-1zM10 6h1v1h-1zM12 6h1v1h-1zM1 7h4v1h-4zM11 7h1v1h-1zM1 8h1v1h-1zM4 8h1v1h-1zM10 8h1v1h-1zM12 8h1v1h-1zM1 9h4v1h-4zM6 6h1v4h-1zM8 9h2v1h-2zM13 9h2v1h-2zM5 10h1v1h-1zM7 10h1v1h-1zM0 11h15v1h-15zM2 13h11v1h-11zM2 15h11v1h-11zM2 16h1v1h-1zM12 16h1v1h-1zM2 17h11v1h-11z"/><path id="g77" d="M3 2h1v2h-1zM8 3h6v1h-6zM1 4h5v1h-5zM3 5h1v2h-1zM11 6h1v1h-1zM13 4h1v3h-1zM0 7h7v1h-7zM12 7h1v1h-1zM1 8h1v1h-1zM5 8h1v1h-1zM8 4h1v5h-1zM2 9h1v1h-1zM4 9h1v1h-1zM8 9h6v1h-6zM1 10h5v1h-5zM13 10h1v2h-1zM3 11h1v2h-1zM0 13h7v1h-7zM10 10h1v4h-1zM12 12h1v2h-1zM11 14h1v1h-1zM8 10h1v6h-1zM10 15h1v1h-1zM12 15h1v1h-1zM8 16h2v1h-2zM13 16h1v1h-1zM3 14h1v4h-1zM8 17h1v1h-1zM14 17h1v1h-1z"/><path id="g78" d="M8 2h1v1h-1zM9 3h1v1h-1zM3 2h1v3h-1zM5 4h9v1h-9zM2 5h1v2h-1zM6 6h7v1h-7zM6 7h1v1h-1zM12 7h1v1h-1zM1 7h2v2h-2zM6 8h7v1h-7zM0 9h1v1h-1zM4 10h11v1h-11zM4 11h1v1h-1zM14 11h1v1h-1zM6 12h7v1h-7zM7 16h1v1h-1zM9 13h1v4h-1zM2 9h1v9h-1zM8 17h1v1h-1z"/><path id="g79" d="M7 2h1v6h-1zM7 8h6v1h-6zM3 6h1v10h-1zM7 9h1v7h-1zM0 16h15v1h-15z"/><path id="g80" d="M2 3h11v1h-11zM2 4h1v1h-1zM7 4h1v1h-1zM12 4h1v1h-1zM2 5h11v1h-11zM2 6h1v1h-1zM7 6h1v1h-1zM12 6h1v1h-1zM2 7h11v1h-11zM4 8h1v2h-1zM10 8h1v2h-1zM1 10h13v1h-13zM4 11h1v2h-1zM10 11h1v2h-1zM0 13h15v1h-15zM4 15h1v1h-1zM10 15h1v1h-1zM3 16h1v1h-1zM11 16h1v1h-1zM2 17h1v1h-1zM12 17h1v1h-1z"/><path id="g81" d="M3 3h1v1h-1zM11 3h1v1h-1zM4 4h1v1h-1zM7 2h1v3h-1zM10 4h1v1h-1zM1 5h14v1h-14zM1 6h1v1h-1zM14 6h1v1h-1zM0 7h1v1h-1zM3 7h9v1h-9zM13 7h1v1h-1zM3 8h1v1h-1zM11 8h1v1h-1zM3 9h9v1h-9zM7 10h1v1h-1zM2 11h11v1h-11zM10 14h1v1h-1zM12 12h1v3h-1zM2 12h1v4h-1zM11 15h1v1h-1zM7 12h1v6h-1z"/><path id="g82" d="M8 2h1v3h-1zM11 2h1v3h-1zM3 2h1v4h-1zM5 5h4v1h-4zM11 5h4v1h-4zM0 6h5v1h-5zM3 7h1v2h-1zM8 6h1v3h-1zM11 6h1v3h-1zM3 9h2v1h-2zM6 9h3v1h-3zM11 9h3v1h-3zM2 10h2v1h-2zM0 11h2v1h-2zM8 10h1v3h-1zM11 10h1v3h-1zM5 13h4v1h-4zM11 13h4v1h-4zM1 16h1v1h-1zM3 11h1v6h-1zM2 17h1v1h-1zM8 14h1v4h-1zM11 14h1v4h-1z"/><path id="g83" d="M1 3h4v1h-4zM4 4h1v1h-1zM9 3h1v2h-1zM8 5h1v1h-1zM10 5h1v1h-1zM1 4h1v3h-1zM3 5h1v2h-1zM7 6h1v1h-1zM11 6h1v1h-1zM1 7h2v1h-2zM6 7h1v1h-1zM12 7h1v1h-1zM3 8h1v1h-1zM5 8h1v1h-1zM7 8h5v1h-5zM13 8h2v1h-2zM9 9h1v2h-1zM1 8h1v4h-1zM6 11h8v1h-8zM1 12h2v1h-2zM4 9h1v4h-1zM3 13h1v1h-1zM7 13h1v1h-1zM11 13h1v1h-1zM6 14h1v1h-1zM12 14h1v1h-1zM5 15h1v1h-1zM7 16h1v1h-1zM9 12h1v5h-1zM13 15h1v2h-1zM1 13h1v5h-1zM8 17h1v1h-1z"/><path id="g84" d="M1 2h1v1h-1zM6 2h4v1h-4zM0 3h4v1h-4zM9 3h1v1h-1zM0 4h1v1h-1zM3 4h1v1h-1zM6 4h4v1h-4zM0 5h5v1h-5zM9 5h1v1h-1zM0 6h1v1h-1zM4 6h7v1h-7zM0 7h6v1h-6zM10 7h1v1h-1zM2 8h1v1h-1zM8 7h1v2h-1zM2 9h3v1h-3zM6 9h5v1h-5zM2 10h1v1h-1zM8 10h1v1h-1zM10 10h1v1h-1zM0 9h1v3h-1zM2 11h3v1h-3zM6 10h1v2h-1zM8 11h3v1h-3zM0 12h3v1h-3zM8 12h1v1h-1z"/><path id="g85" d="M2 2h1v1h-1zM6 2h5v1h-5zM1 3h4v1h-4zM7 3h1v1h-1zM1 4h1v1h-1zM3 4h1v1h-1zM6 4h1v1h-1zM10 3h1v2h-1zM0 5h6v1h-6zM8 5h2v1h-2zM1 6h1v1h-1zM3 6h1v1h-1zM5 6h2v1h-2zM8 6h1v1h-1zM1 7h10v1h-10zM1 8h1v1h-1zM3 8h1v1h-1zM5 8h1v1h-1zM8 8h1v1h-1zM1 9h10v1h-10zM1 10h1v2h-1zM3 10h1v2h-1zM5 10h1v2h-1zM0 12h1v1h-1zM4 12h2v1h-2zM8 10h1v3h-1z"/><path id="g86" d="M0 2h4v1h-4zM7 2h1v1h-1zM3 3h1v1h-1zM6 3h1v1h-1zM8 3h1v1h-1zM0 3h1v2h-1zM2 4h1v1h-1zM5 4h1v1h-1zM9 4h1v1h-1zM0 5h2v1h-2zM4 5h1v1h-1zM6 5h3v1h-3zM10 5h1v1h-1zM2 6h1v1h-1zM7 6h1v1h-1zM3 7h8v1h-8zM0 6h1v3h-1zM3 8h1v1h-1zM0 9h3v1h-3zM5 9h1v1h-1zM9 9h1v1h-1zM4 10h1v1h-1zM3 11h1v1h-1zM7 8h1v4h-1zM10 10h1v2h-1zM0 10h1v3h-1zM6 12h2v1h-2z"/><path id="g87" d="M2 2h1v2h-1zM7 2h1v2h-1zM0 4h5v1h-5zM9 4h1v1h-1zM4 5h1v1h-1zM6 4h1v2h-1zM10 5h1v1h-1zM2 5h1v2h-1zM4 6h7v1h-7zM4 7h1v1h-1zM1 7h1v2h-1zM3 8h1v1h-1zM6 8h5v1h-5zM2 9h2v1h-2zM2 10h1v1h-1zM6 9h1v2h-1zM10 9h1v2h-1zM1 11h1v1h-1zM4 10h1v2h-1zM6 11h5v1h-5zM0 12h1v1h-1zM6 12h1v1h-1zM10 12h1v1h-1z"/><path id="g88" d="M2 3h11v1h-11zM2 4h1v3h-1zM12 4h1v3h-1zM2 7h11v1h-11zM2 8h1v3h-1zM12 8h1v3h-1zM2 11h11v1h-11zM2 12h1v4h-1zM12 12h1v4h-1zM2 16h11v1h-11zM2 17h1v1h-1zM12 17h1v1h-1z"/><path id="g89" d="M3 2h1v1h-1zM11 2h1v2h-1zM4 3h1v2h-1zM10 4h1v1h-1zM0 5h15v1h-15zM2 7h5v1h-5zM2 8h1v2h-1zM6 8h1v2h-1zM2 10h5v1h-5zM2 11h1v2h-1zM6 11h1v2h-1zM2 13h5v1h-5zM9 8h1v6h-1zM4 16h1v1h-1zM6 14h1v3h-1zM10 16h1v1h-1zM12 7h1v10h-1zM2 14h1v4h-1zM5 17h1v1h-1zM11 17h1v1h-1z"/><path id="g90" d="M7 2h1v1h-1zM2 3h11v1h-11zM7 4h1v1h-1zM12 4h1v1h-1zM0 5h15v1h-15zM7 6h1v1h-1zM12 6h1v1h-1zM2 7h11v1h-11zM7 8h1v1h-1zM1 9h13v1h-13zM2 11h11v1h-11zM2 12h1v1h-1zM7 12h1v1h-1zM12 12h1v1h-1zM2 13h11v1h-11zM2 14h1v1h-1zM7 14h1v1h-1zM12 14h1v1h-1zM2 15h11v1h-11zM0 17h15v1h-15z"/><path id="g91" d="M0 3h15v1h-15zM6 4h1v2h-1zM5 6h1v1h-1zM2 7h11v1h-11zM5 8h1v2h-1zM9 8h1v2h-1zM5 10h5v1h-5zM5 11h1v2h-1zM9 11h1v2h-1zM5 13h5v1h-5zM2 8h1v8h-1zM5 14h1v2h-1zM9 14h1v2h-1zM12 8h1v8h-1zM2 16h11v1h-11zM2 17h1v1h-1zM12 17h1v1h-1z"/><path id="g92" d="M1 3h5v1h-5zM8 3h5v1h-5zM1 4h1v1h-1zM5 4h1v1h-1zM8 4h1v1h-1zM12 4h1v1h-1zM1 5h5v1h-5zM8 5h5v1h-5zM1 6h1v1h-1zM5 6h1v1h-1zM8 6h1v1h-1zM12 6h1v1h-1zM1 7h5v1h-5zM8 7h5v1h-5zM4 9h6v1h-6zM5 10h1v2h-1zM8 10h1v2h-1zM3 12h8v1h-8zM5 13h1v2h-1zM4 15h1v1h-1zM3 16h1v1h-1zM8 13h1v4h-1zM10 16h1v1h-1zM12 8h1v9h-1zM1 8h1v10h-1zM11 17h1v1h-1z"/><path id="g93" d="M7 2h1v2h-1zM13 2h1v2h-1zM6 4h1v1h-1zM8 4h1v1h-1zM12 4h1v1h-1zM14 4h1v1h-1zM3 2h1v4h-1zM6 5h3v1h-3zM12 5h3v1h-3zM0 6h5v1h-5zM7 6h1v1h-1zM13 6h1v1h-1zM3 7h1v1h-1zM6 7h1v1h-1zM8 7h1v1h-1zM12 7h1v1h-1zM14 7h1v1h-1zM2 8h2v1h-2zM6 8h3v1h-3zM12 8h3v1h-3zM2 9h3v1h-3zM7 9h1v1h-1zM10 2h1v8h-1zM13 9h1v1h-1zM5 10h10v1h-10zM1 10h1v2h-1zM0 12h1v1h-1zM7 11h1v3h-1zM11 11h1v3h-1zM13 12h1v2h-1zM8 14h1v1h-1zM9 15h1v1h-1zM12 14h1v2h-1zM14 14h1v2h-1zM6 14h1v3h-1zM11 16h1v1h-1zM13 16h2v1h-2zM3 10h1v8h-1zM5 17h1v1h-1zM10 17h1v1h-1zM14 17h1v1h-1z"/><path id="g94" d="M2 3h11v1h-11zM5 6h5v1h-5zM5 7h1v5h-1zM9 7h1v5h-1zM5 12h5v1h-5zM2 4h1v11h-1zM12 4h1v11h-1zM2 15h11v1h-11zM2 16h1v1h-1zM12 16h1v1h-1z"/><path id="g95" d="M2 3h13v1h-13zM8 4h1v1h-1zM7 5h1v1h-1zM5 6h7v1h-7zM5 7h1v2h-1zM11 7h1v2h-1zM5 9h7v1h-7zM5 10h1v2h-1zM11 10h1v2h-1zM5 12h7v1h-7zM2 4h1v11h-1zM5 14h1v1h-1zM11 14h1v1h-1zM4 15h1v1h-1zM12 15h1v1h-1zM1 15h1v2h-1zM3 16h1v1h-1zM6 16h1v1h-1zM8 13h1v4h-1zM13 16h1v1h-1zM0 17h1v1h-1zM7 17h1v1h-1z"/><path id="g96" d="M0 3h7v1h-7zM0 4h1v1h-1zM6 4h1v1h-1zM0 5h2v1h-2zM3 4h1v2h-1zM5 5h2v1h-2zM11 2h1v4h-1zM2 6h3v1h-3zM11 6h4v1h-4zM0 6h1v2h-1zM3 7h1v1h-1zM6 6h1v2h-1zM0 8h7v1h-7zM3 9h1v1h-1zM11 7h1v3h-1zM0 10h7v1h-7zM8 10h7v1h-7zM3 11h1v1h-1zM3 12h4v1h-4zM0 13h3v1h-3zM6 14h1v2h-1zM8 11h1v5h-1zM14 11h1v5h-1zM2 15h1v2h-1zM4 15h1v2h-1zM8 16h7v1h-7zM0 15h1v3h-1zM8 17h1v1h-1zM14 17h1v1h-1z"/><path id="g97" d="M2 2h1v1h-1zM2 3h8v1h-8zM1 4h1v1h-1zM1 5h6v1h-6zM0 6h1v1h-1zM2 6h1v2h-1zM6 6h1v2h-1zM2 8h5v1h-5zM9 4h1v6h-1zM7 10h2v1h-2zM2 9h1v3h-1zM10 10h1v2h-1zM3 12h8v1h-8z"/><path id="g98" d="M1 2h1v1h-1zM3 2h1v1h-1zM7 2h1v1h-1zM1 3h10v1h-10zM3 4h1v1h-1zM0 5h4v1h-4zM7 4h1v2h-1zM1 6h1v1h-1zM3 6h1v1h-1zM5 6h5v1h-5zM0 7h1v1h-1zM5 7h1v1h-1zM0 8h11v1h-11zM3 9h1v1h-1zM5 9h1v1h-1zM8 9h1v1h-1zM2 10h2v1h-2zM6 10h2v1h-2zM0 11h2v1h-2zM3 11h1v1h-1zM5 11h1v1h-1zM7 11h2v1h-2zM3 12h2v1h-2zM9 12h2v1h-2z"/><path id="g99" d="M0 3h5v1h-5zM7 2h1v2h-1zM4 4h1v1h-1zM6 4h5v1h-5zM4 5h2v1h-2zM1 6h4v1h-4zM6 6h1v3h-1zM9 5h1v4h-1zM1 7h1v4h-1zM3 10h1v1h-1zM7 9h2v2h-2zM1 11h2v1h-2zM6 11h1v1h-1zM9 11h1v1h-1zM1 12h1v1h-1zM4 12h2v1h-2zM10 12h1v1h-1z"/><path id="g100" d="M1 2h1v1h-1zM5 2h1v1h-1zM9 2h1v1h-1zM0 3h1v1h-1zM2 3h1v1h-1zM4 3h3v1h-3zM8 3h1v1h-1zM10 3h1v1h-1zM1 4h1v1h-1zM9 4h1v1h-1zM0 5h1v1h-1zM2 5h1v1h-1zM4 5h3v1h-3zM8 5h1v1h-1zM10 5h1v1h-1zM0 6h3v1h-3zM4 6h1v1h-1zM6 6h1v1h-1zM8 6h3v1h-3zM1 7h1v1h-1zM3 7h4v1h-4zM9 7h1v1h-1zM0 8h1v1h-1zM2 8h1v1h-1zM8 8h1v1h-1zM10 8h1v1h-1zM3 9h7v1h-7zM1 10h2v1h-2zM4 10h1v1h-1zM7 10h1v1h-1zM5 11h2v1h-2zM1 12h4v1h-4zM7 12h4v1h-4z"/><path id="g101" d="M0 2h7v1h-7zM0 3h1v3h-1zM2 3h1v3h-1zM4 3h1v3h-1zM6 3h1v3h-1zM8 3h1v3h-1zM0 6h9v1h-9zM8 7h1v3h-1zM4 7h1v4h-1zM2 7h1v5h-1zM6 7h1v5h-1zM10 2h1v10h-1zM0 7h1v6h-1zM4 12h3v1h-3zM8 12h3v1h-3z"/><path id="g102" d="M2 2h9v1h-9zM2 3h1v1h-1zM10 3h1v1h-1zM2 4h9v1h-9zM2 5h1v1h-1zM4 5h1v1h-1zM6 5h1v1h-1zM8 5h1v1h-1zM2 6h8v1h-8zM2 7h1v1h-1zM5 7h1v1h-1zM7 7h1v1h-1zM9 7h1v1h-1zM2 8h9v1h-9zM2 9h3v1h-3zM6 9h1v1h-1zM8 9h1v1h-1zM2 10h1v1h-1zM4 10h5v1h-5zM1 11h1v1h-1zM6 11h1v1h-1zM8 11h1v1h-1zM10 9h1v3h-1zM0 12h1v1h-1zM3 12h5v1h-5zM9 12h2v1h-2z"/><path id="g103" d="M2 2h1v2h-1zM2 4h2v1h-2zM5 3h1v2h-1zM7 2h1v3h-1zM4 5h7v1h-7zM2 5h1v2h-1zM4 6h1v1h-1zM0 4h1v4h-1zM2 7h2v1h-2zM7 6h1v2h-1zM5 8h5v1h-5zM7 9h1v3h-1zM2 8h1v5h-1zM4 12h7v1h-7z"/><path id="g104" d="M1 3h9v1h-9zM5 4h1v7h-1zM0 11h11v1h-11z"/><path id="g105" d="M2 2h7v1h-7zM2 3h1v1h-1zM8 3h1v1h-1zM2 4h7v1h-7zM2 5h1v1h-1zM8 5h1v1h-1zM2 6h7v1h-7zM2 7h1v1h-1zM8 7h1v1h-1zM2 8h7v1h-7zM2 9h1v1h-1zM8 9h1v1h-1zM0 10h11v1h-11zM3 11h1v1h-1zM7 11h1v1h-1zM0 12h3v1h-3zM8 12h3v1h-3z"/><path id="g106" d="M2 2h1v1h-1zM7 2h1v1h-1zM2 3h4v1h-4zM7 3h4v1h-4zM1 4h1v1h-1zM4 4h1v1h-1zM6 4h1v1h-1zM8 4h1v1h-1zM0 5h1v1h-1zM3 5h1v1h-1zM5 5h1v1h-1zM9 5h1v1h-1zM1 6h9v1h-9zM3 7h1v1h-1zM6 7h1v1h-1zM9 7h1v1h-1zM2 8h3v1h-3zM6 8h4v1h-4zM1 9h1v1h-1zM5 9h2v1h-2zM9 9h1v1h-1zM0 10h1v1h-1zM6 10h4v1h-4zM6 11h1v1h-1zM9 11h1v1h-1zM3 9h1v4h-1zM6 12h4v1h-4z"/><path id="g107" d="M5 2h1v1h-1zM0 3h11v1h-11zM3 4h1v1h-1zM7 4h1v1h-1zM2 5h1v1h-1zM5 4h1v2h-1zM8 5h1v1h-1zM0 6h11v1h-11zM2 7h1v1h-1zM8 7h1v1h-1zM2 8h7v1h-7zM2 9h1v1h-1zM8 9h1v1h-1zM2 10h7v1h-7zM0 12h11v1h-11z"/><path id="g108" d="M2 2h1v1h-1zM6 2h1v1h-1zM9 2h1v1h-1zM1 3h1v1h-1zM3 3h1v1h-1zM5 3h6v1h-6zM0 4h1v1h-1zM4 4h1v1h-1zM1 5h4v1h-4zM6 4h1v2h-1zM9 4h1v2h-1zM2 6h1v1h-1zM5 6h6v1h-6zM0 7h5v1h-5zM6 8h5v1h-5zM0 9h1v1h-1zM2 8h1v2h-1zM4 9h1v1h-1zM6 9h1v1h-1zM10 9h1v1h-1zM1 10h3v1h-3zM6 10h5v1h-5zM2 11h3v1h-3zM6 11h1v1h-1zM10 11h1v1h-1zM0 12h3v1h-3zM6 12h5v1h-5z"/><path id="g109" d="M1 2h1v1h-1zM5 2h5v1h-5zM0 3h4v1h-4zM5 3h1v2h-1zM9 3h1v2h-1zM0 5h4v1h-4zM5 5h5v1h-5zM0 7h4v1h-4zM5 7h5v1h-5zM7 8h1v1h-1zM0 9h11v1h-11zM0 10h1v1h-1zM3 10h1v1h-1zM6 10h1v1h-1zM8 10h1v1h-1zM0 11h4v1h-4zM5 11h1v1h-1zM9 11h1v1h-1zM0 12h1v1h-1zM3 12h2v1h-2zM10 12h1v1h-1z"/><path id="g110" d="M3 2h1v1h-1zM7 2h1v1h-1zM3 3h8v1h-8zM7 4h1v1h-1zM2 4h1v2h-1zM4 5h7v1h-7zM1 6h2v1h-2zM4 6h1v1h-1zM7 6h1v1h-1zM10 6h1v1h-1zM0 7h1v1h-1zM4 7h7v1h-7zM4 8h1v1h-1zM5 9h1v1h-1zM7 8h1v2h-1zM6 10h1v1h-1zM2 7h1v5h-1zM5 11h1v1h-1zM7 11h2v1h-2zM2 12h3v1h-3zM9 12h2v1h-2z"/><path id="g111" d="M1 2h9v1h-9zM1 3h1v3h-1zM4 3h1v3h-1zM6 3h1v3h-1zM9 3h1v3h-1zM0 6h11v1h-11zM4 7h1v5h-1zM6 7h1v5h-1zM9 7h1v5h-1zM1 7h1v6h-1zM8 12h2v1h-2z"/><path id="g112" d="M4 2h1v1h-1zM5 3h1v1h-1zM0 4h11v1h-11zM3 5h1v3h-1zM7 5h1v3h-1zM4 8h1v2h-1zM6 8h1v2h-1zM5 10h1v1h-1zM3 11h2v1h-2zM6 11h2v1h-2zM0 12h3v1h-3zM8 12h3v1h-3z"/><path id="g113" d="M5 2h1v1h-1zM1 3h10v1h-10zM1 4h1v1h-1zM10 4h1v1h-1zM0 5h1v1h-1zM3 5h5v1h-5zM9 5h1v1h-1zM6 6h1v1h-1zM5 7h1v1h-1zM0 8h11v1h-11zM5 9h1v3h-1zM3 12h3v1h-3z"/><path id="g114" d="M0 3h11v1h-11zM5 4h1v2h-1zM5 6h2v1h-2zM7 7h1v1h-1zM8 8h1v2h-1zM5 7h1v6h-1z"/><path id="g115" d="M4 2h7v1h-7zM4 3h1v2h-1zM7 3h1v2h-1zM10 3h1v2h-1zM2 2h1v4h-1zM4 5h7v1h-7zM1 6h2v1h-2zM7 6h1v1h-1zM0 7h1v1h-1zM6 7h3v1h-3zM6 8h1v1h-1zM8 8h1v1h-1zM6 9h3v1h-3zM4 6h1v5h-1zM10 6h1v5h-1zM4 11h7v1h-7zM2 7h1v6h-1zM4 12h1v1h-1zM10 12h1v1h-1z"/><path id="g116" d="M5 2h1v4h-1zM5 6h5v1h-5zM5 7h1v5h-1zM0 12h11v1h-11z"/><path id="g117" d="M1 2h1v1h-1zM4 2h3v1h-3zM8 2h3v1h-3zM4 3h1v1h-1zM6 3h1v1h-1zM8 3h1v1h-1zM10 3h1v1h-1zM2 3h1v2h-1zM4 4h3v1h-3zM8 4h3v1h-3zM0 6h3v1h-3zM4 5h1v2h-1zM6 6h1v1h-1zM8 5h1v2h-1zM10 6h1v1h-1zM4 7h7v1h-7zM6 8h1v1h-1zM8 8h1v1h-1zM4 9h7v1h-7zM2 7h1v4h-1zM6 10h1v1h-1zM9 10h1v1h-1zM1 11h1v1h-1zM3 11h1v1h-1zM5 11h1v1h-1zM10 11h1v1h-1zM0 12h1v1h-1zM4 12h7v1h-7z"/><path id="g118" d="M3 2h1v1h-1zM7 2h1v1h-1zM0 3h11v1h-11zM1 4h1v1h-1zM3 4h1v1h-1zM5 4h1v1h-1zM7 4h1v1h-1zM9 4h1v1h-1zM1 5h5v1h-5zM8 5h1v1h-1zM2 6h3v1h-3zM7 6h1v1h-1zM9 6h1v1h-1zM1 7h1v1h-1zM3 7h1v1h-1zM5 7h2v1h-2zM10 7h1v1h-1zM1 8h9v1h-9zM5 9h1v1h-1zM5 10h4v1h-4zM2 10h1v2h-1zM5 11h1v1h-1zM0 12h11v1h-11z"/><path id="g119" d="M6 2h1v1h-1zM8 2h1v1h-1zM2 2h1v2h-1zM4 3h7v1h-7zM0 4h4v1h-4zM6 4h1v1h-1zM8 4h1v1h-1zM2 5h1v1h-1zM5 5h5v1h-5zM2 6h2v1h-2zM5 6h1v1h-1zM9 6h1v1h-1zM4 7h6v1h-6zM1 7h2v2h-2zM5 8h1v1h-1zM9 8h1v1h-1zM0 9h1v1h-1zM4 9h7v1h-7zM7 10h1v1h-1zM6 11h1v1h-1zM8 11h1v1h-1zM2 9h1v4h-1zM4 12h2v1h-2zM9 12h2v1h-2z"/><path id="g120" d="M4 2h1v1h-1zM6 2h5v1h-5zM2 2h1v2h-1zM4 3h2v1h-2zM8 3h1v1h-1zM10 3h1v1h-1zM0 4h5v1h-5zM2 5h1v1h-1zM4 5h3v1h-3zM9 4h1v2h-1zM2 6h3v1h-3zM7 6h4v1h-4zM2 7h1v1h-1zM4 7h3v1h-3zM9 7h1v1h-1zM0 8h3v1h-3zM5 8h1v1h-1zM7 8h1v1h-1zM9 8h2v1h-2zM2 9h6v1h-6zM5 10h1v1h-1zM7 10h1v1h-1zM9 9h1v2h-1zM0 11h1v1h-1zM2 10h1v2h-1zM4 11h1v1h-1zM8 11h2v1h-2zM1 12h3v1h-3zM6 11h1v2h-1zM9 12h2v1h-2z"/></defs></svg>
<div style="left:0px;top:0px;width:1440px;height:18px;background:linear-gradient(90deg,#0a246a 0%,#a6caf0 100%);"></div>
<svg style="left:2px;top:0px;" width="16" height="17" viewBox="0 0 16 17"><path d="M7 4L14 1" stroke="#e0e0e0" stroke-width="1.2"/><rect x="1.5" y="8.5" width="9" height="7" rx="2" fill="#5ab0d8" stroke="#d0d0d0"/><circle cx="12" cy="8" r="3.2" fill="#2c2"/><circle cx="6" cy="5" r="2" fill="#d66"/><circle cx="14" cy="1.5" r="1.5" fill="#ddd"/></svg>
<div class="t" style="left:20px;top:2px;color:#fff;font-size:11px;font-weight:bold;">UT-110 EX -</div>
<div style="left:20px;top:4px;width:63px;height:5px;background:#000;"></div>
<div style="left:83px;top:2px;width:316px;height:16px;background:#000;"></div>
<div style="left:396px;top:5px;width:6px;height:7px;background:#000;"></div>
<div style="left:1388px;top:2px;width:16px;height:14px;background:#d4d0c8;border-top:1px solid #fff;border-left:1px solid #fff;border-right:1px solid #404040;border-bottom:1px solid #404040;box-shadow:inset -1px -1px 0 #808080;"></div>
<div style="left:1392px;top:10px;width:6px;height:2px;background:#000"></div>
<div style="left:1404px;top:2px;width:16px;height:14px;background:#d4d0c8;border-top:1px solid #fff;border-left:1px solid #fff;border-right:1px solid #404040;border-bottom:1px solid #404040;box-shadow:inset -1px -1px 0 #808080;"></div>
<svg style="left:1407px;top:3px;" width="10" height="10" viewBox="0 0 10 10"><rect x="3" y="0.5" width="6" height="5" fill="none" stroke="#000"/><rect x="3" y="0" width="6" height="2" fill="#000"/><rect x="0.5" y="3.5" width="6" height="5" fill="#d4d0c8" stroke="#000"/><rect x="0" y="3" width="7" height="2" fill="#000"/></svg>
<div style="left:1421px;top:2px;width:16px;height:14px;background:#d4d0c8;border-top:1px solid #fff;border-left:1px solid #fff;border-right:1px solid #404040;border-bottom:1px solid #404040;box-shadow:inset -1px -1px 0 #808080;"></div>
<svg style="left:1424px;top:3px;" width="10" height="10" viewBox="0 0 10 10"><path d="M1 1L8 8M8 1L1 8" stroke="#000" stroke-width="2"/></svg>
<div class="t" style="left:6px;top:22px;font-size:12px;"><svg class="g" width="24" height="10" viewBox="0 2 24 10"><text class="h">專案</text><use href="#g0" x="0"/><use href="#g1" x="12"/></svg> (F)</div>
<div class="t" style="left:59px;top:22px;font-size:12px;"><svg class="g" width="24" height="10" viewBox="0 2 24 10"><text class="h">編輯</text><use href="#g2" x="0"/><use href="#g3" x="12"/></svg> (E)</div>
<div class="t" style="left:112px;top:22px;font-size:12px;"><svg class="g" width="24" height="10" viewBox="0 2 24 10"><text class="h">檢視</text><use href="#g4" x="0"/><use href="#g5" x="12"/></svg> (V)</div>
<div class="t" style="left:167px;top:22px;font-size:12px;"><svg class="g" width="48" height="10" viewBox="0 2 48 10"><text class="h">共用設定</text><use href="#g6" x="0"/><use href="#g7" x="12"/><use href="#g8" x="24"/><use href="#g9" x="36"/></svg> (R)</div>
<div class="t" style="left:246px;top:22px;font-size:12px;"><svg class="g" width="24" height="10" viewBox="0 2 24 10"><text class="h">繪圖</text><use href="#g10" x="0"/><use href="#g11" x="12"/></svg> (D)</div>
<div class="t" style="left:301px;top:22px;font-size:12px;letter-spacing:-0.7px;">Parts (P)</div>
<div class="t" style="left:352px;top:22px;font-size:12px;"><svg class="g" width="24" height="10" viewBox="0 2 24 10"><text class="h">畫面</text><use href="#g12" x="0"/><use href="#g13" x="12"/></svg> (S)</div>
<div class="t" style="left:406px;top:22px;font-size:12px;"><svg class="g" width="24" height="10" viewBox="0 2 24 10"><text class="h">說明</text><use href="#g14" x="0"/><use href="#g15" x="12"/></svg> (H)</div>
<div style="left:3px;top:38px;width:97px;height:32px;border:1px solid #b8b48c;border-radius:9px;background:linear-gradient(#f6f4e8,#e6e3d2 60%,#d8d4bc);box-shadow:inset 0 0 0 1px #efedde;"></div>
<div class="t" style="left:38px;top:47px;font-size:14px;line-height:16px;"><svg class="g" width="56" height="10" viewBox="0 4 56 10"><text class="h">系統設定</text><use href="#g16" x="0"/><use href="#g17" x="14"/><use href="#g18" x="28"/><use href="#g19" x="42"/></svg></div>
<svg style="left:103px;top:49px;" width="17" height="10" viewBox="0 0 17 10"><path d="M1 1L7 5L1 9L3.5 5Z M8 1L14 5L8 9L10.5 5Z" fill="#2020d0" stroke="#3030e0" stroke-width="1.2" stroke-linejoin="round"/></svg>
<div style="left:120px;top:38px;width:98px;height:32px;border:3px solid #5a80a8;border-radius:8px;background:linear-gradient(#eef0f4,#d8dce4);"></div>
<div class="t" style="left:170px;top:47px;font-size:14px;line-height:16px;"><svg class="g" width="28" height="10" viewBox="0 4 28 10"><text class="h">編輯</text><use href="#g20" x="0"/><use href="#g21" x="14"/></svg></div>
<svg style="left:221px;top:49px;" width="17" height="10" viewBox="0 0 17 10"><path d="M1 1L7 5L1 9L3.5 5Z M8 1L14 5L8 9L10.5 5Z" fill="#2020d0" stroke="#3030e0" stroke-width="1.2" stroke-linejoin="round"/></svg>
<div style="left:238px;top:38px;width:97px;height:32px;border:1px solid #b8b48c;border-radius:9px;background:linear-gradient(#f6f4e8,#e6e3d2 60%,#d8d4bc);box-shadow:inset 0 0 0 1px #efedde;"></div>
<div class="t" style="left:288px;top:47px;font-size:14px;line-height:16px;"><svg class="g" width="28" height="10" viewBox="0 4 28 10"><text class="h">預覽</text><use href="#g22" x="0"/><use href="#g23" x="14"/></svg></div>
<svg style="left:338px;top:49px;" width="17" height="10" viewBox="0 0 17 10"><path d="M1 1L7 5L1 9L3.5 5Z M8 1L14 5L8 9L10.5 5Z" fill="#2020d0" stroke="#3030e0" stroke-width="1.2" stroke-linejoin="round"/></svg>
<div style="left:356px;top:38px;width:97px;height:32px;border:1px solid #b8b48c;border-radius:9px;background:linear-gradient(#f6f4e8,#e6e3d2 60%,#d8d4bc);box-shadow:inset 0 0 0 1px #efedde;"></div>
<div class="t" style="left:406px;top:47px;font-size:14px;line-height:16px;"><svg class="g" width="28" height="10" viewBox="0 4 28 10"><text class="h">模擬</text><use href="#g24" x="0"/><use href="#g25" x="14"/></svg></div>
<svg style="left:456px;top:49px;" width="17" height="10" viewBox="0 0 17 10"><path d="M1 1L7 5L1 9L3.5 5Z M8 1L14 5L8 9L10.5 5Z" fill="#2020d0" stroke="#3030e0" stroke-width="1.2" stroke-linejoin="round"/></svg>
<div style="left:474px;top:38px;width:98px;height:32px;border:1px solid #b8b48c;border-radius:9px;background:linear-gradient(#f6f4e8,#e6e3d2 60%,#d8d4bc);box-shadow:inset 0 0 0 1px #efedde;"></div>
<div class="t" style="left:510px;top:47px;font-size:14px;line-height:16px;"><svg class="g" width="56" height="10" viewBox="0 4 56 10"><text class="h">傳送專案</text><use href="#g26" x="0"/><use href="#g27" x="14"/><use href="#g28" x="28"/><use href="#g29" x="42"/></svg></div>
<svg style="left:575px;top:49px;" width="17" height="10" viewBox="0 0 17 10"><path d="M1 1L7 5L1 9L3.5 5Z M8 1L14 5L8 9L10.5 5Z" fill="#2020d0" stroke="#3030e0" stroke-width="1.2" stroke-linejoin="round"/></svg>
<div style="left:592px;top:38px;width:97px;height:32px;border:1px solid #b8b48c;border-radius:9px;background:linear-gradient(#f6f4e8,#e6e3d2 60%,#d8d4bc);box-shadow:inset 0 0 0 1px #efedde;"></div>
<div class="t" style="left:642px;top:47px;font-size:14px;line-height:16px;"><svg class="g" width="28" height="10" viewBox="0 4 28 10"><text class="h">監控</text><use href="#g30" x="0"/><use href="#g31" x="14"/></svg></div>
<svg style="left:0;top:0;width:0;height:0;position:absolute"><defs><linearGradient id="scr" x1="0" y1="0" x2="1" y2="1"><stop offset="0" stop-color="#0a3a8a"/><stop offset="0.6" stop-color="#3a8ad0"/><stop offset="1" stop-color="#b0e0f8"/></linearGradient><linearGradient id="scrd" x1="0" y1="0" x2="1" y2="1"><stop offset="0" stop-color="#c0c0c0"/><stop offset="0.5" stop-color="#202020"/><stop offset="1" stop-color="#505050"/></linearGradient></defs></svg>
<svg style="left:6px;top:40px;" width="34" height="30" viewBox="0 0 34 30"><path d="M1 2L30 9L30 24.5L1 21Z" fill="#9aa0a8" stroke="#606870" stroke-width="0.8"/><path d="M30 9L32 10L32 25.5L30 24.5Z" fill="#707880"/><path d="M4 5.5L27 11.5L27 22.0L4 18Z" fill="url(#scr)"/><path d="M6 17L6 27L8.5 24.5L11 29L13 28L10.5 23.5H14Z" fill="#fff" stroke="#000" stroke-width="0.9"/></svg>
<svg style="left:122px;top:39px;" width="40" height="30" viewBox="0 0 40 30"><ellipse cx="15" cy="17" rx="14" ry="10" fill="#8a5a1a"/><ellipse cx="15" cy="16" rx="12.5" ry="8.5" fill="#d8a048"/><ellipse cx="8" cy="19" rx="3.5" ry="2.8" fill="#222"/><ellipse cx="8.5" cy="18.5" rx="2" ry="1.6" fill="#fff"/><circle cx="10" cy="10" r="2" fill="#d33"/><circle cx="16" cy="9" r="2.2" fill="#2a3ad0"/><circle cx="22" cy="18" r="3" fill="#3a3"/><circle cx="13" cy="23" r="2" fill="#a06020"/><path d="M18 14L27 1" stroke="#333" stroke-width="2.2"/></svg>
<svg style="left:240px;top:40px;" width="36" height="30" viewBox="0 0 36 30"><path d="M1 2L28 9L28 25.5L1 22Z" fill="#9aa0a8" stroke="#606870" stroke-width="0.8"/><path d="M28 9L30 10L30 26.5L28 25.5Z" fill="#707880"/><path d="M4 5.5L25 11.5L25 23.0L4 19Z" fill="url(#scr)"/><circle cx="17" cy="11" r="7.5" fill="#d8f0f8" stroke="#30405a" stroke-width="1.6" opacity="0.95"/><path d="M21 16L29 26" stroke="#c06a20" stroke-width="3.5"/></svg>
<svg style="left:358px;top:40px;" width="36" height="30" viewBox="0 0 36 30"><path d="M5 2L30 9L30 25.5L5 22Z" fill="#9aa0a8" stroke="#606870" stroke-width="0.8"/><path d="M30 9L32 10L32 26.5L30 25.5Z" fill="#707880"/><path d="M8 5.5L27 11.5L27 23.0L8 19Z" fill="url(#scrd)"/><rect x="0" y="7" width="15" height="13" fill="#60c8f0" opacity="0.85"/><rect x="2" y="9" width="4" height="4" fill="#8c3"/><rect x="7" y="9" width="4" height="4" fill="#8c3"/><rect x="2" y="14" width="4" height="4" fill="#8c3"/><rect x="7" y="14" width="4" height="4" fill="#fff"/></svg>
<svg style="left:476px;top:40px;" width="36" height="30" viewBox="0 0 36 30"><path d="M1 9L21 14L21 27.5L1 25Z" fill="#9aa0a8" stroke="#606870" stroke-width="0.8"/><path d="M21 14L23 15L23 28.5L21 27.5Z" fill="#707880"/><path d="M4 12.5L18 16.5L18 25.0L4 22Z" fill="url(#scr)"/><path d="M21 24H25V8" stroke="#888" stroke-width="2" fill="none"/><path d="M20 2H31L29 7H22Z" fill="#c8c8c8" stroke="#555" stroke-width="0.8"/><rect x="23" y="7" width="5" height="2" fill="#777"/></svg>
<svg style="left:596px;top:40px;" width="36" height="30" viewBox="0 0 36 30"><path d="M1 2L30 9L30 25.5L1 22Z" fill="#9aa0a8" stroke="#606870" stroke-width="0.8"/><path d="M30 9L32 10L32 26.5L30 25.5Z" fill="#707880"/><path d="M4 5.5L27 11.5L27 23.0L4 19Z" fill="url(#scr)"/><path d="M14 8L6 19H11L5 29L18 15H13L19 8Z" fill="#f8e020" stroke="#a08000" stroke-width="0.6"/></svg>
<div style="left:2px;top:74px;width:3px;height:18px;background:repeating-linear-gradient(#fff 0 1px,#808080 1px 2px,transparent 2px 3px);opacity:.8"></div>
<div style="left:2px;top:98px;width:3px;height:22px;background:repeating-linear-gradient(#fff 0 1px,#808080 1px 2px,transparent 2px 3px);opacity:.8"></div>
<div style="left:2px;top:124px;width:3px;height:18px;background:repeating-linear-gradient(#fff 0 1px,#808080 1px 2px,transparent 2px 3px);opacity:.8"></div>
<svg style="left:9px;top:74px;" width="16" height="16" viewBox="0 0 16 16"><path d="M3.5 1.5H10L13.5 5V14.5H3.5Z" fill="#fff" stroke="#3a3a8a"/><path d="M10 1.5V5H13.5" fill="#c8c8e8" stroke="#3a3a8a"/></svg>
<svg style="left:35px;top:74px;" width="16" height="16" viewBox="0 0 16 16"><path d="M1 6L4 4H9L10 6H14L12 13H1Z" fill="#f0d030" stroke="#806000"/><path d="M3 8H15L12 13H1Z" fill="#e8c020" stroke="#806000"/></svg>
<svg style="left:60px;top:74px;" width="16" height="16" viewBox="0 0 16 16"><rect x="2.5" y="2.5" width="11" height="11" fill="#c8b8e8" stroke="#4a3a9a"/><rect x="5" y="3" width="6" height="4" fill="#fff"/><rect x="5" y="9" width="6" height="4" fill="#e8e0f8" stroke="#4a3a9a" stroke-width=".6"/></svg>
<div style="left:84px;top:73px;width:2px;height:19px;border-left:1px solid #a0a0a0;border-right:1px solid #fff;"></div>
<svg style="left:90px;top:74px;" width="16" height="16" viewBox="0 0 16 16"><rect x="4" y="1" width="8" height="5" fill="#fff" stroke="#555"/><path d="M1 7H15V13H1Z" fill="#e8e8e8" stroke="#444"/><rect x="1" y="12" width="14" height="2" fill="#333"/></svg>
<svg style="left:116px;top:74px;" width="16" height="16" viewBox="0 0 16 16"><path d="M2.5 1.5H9L12.5 5V14.5H2.5Z" fill="#e8e8f8" stroke="#3a3a8a"/><circle cx="9" cy="8" r="3.5" fill="#9ce0f0" stroke="#223"/><path d="M11 10L15 14" stroke="#553" stroke-width="2"/></svg>
<div style="left:139px;top:73px;width:2px;height:19px;border-left:1px solid #a0a0a0;border-right:1px solid #fff;"></div>
<svg style="left:145px;top:74px;" width="16" height="16" viewBox="0 0 16 16"><rect x="3.5" y="4.5" width="10" height="9" fill="#fff" stroke="#7040c0" stroke-width="2"/><rect x="6" y="7" width="5" height="4" fill="#e8e0ff"/><path d="M1 1L3 3M3 1L1 3" stroke="#333"/></svg>
<svg style="left:171px;top:74px;" width="16" height="16" viewBox="0 0 16 16"><rect x="1.5" y="1.5" width="9" height="8" fill="#c0a8f0" stroke="#6030b0" stroke-width="1.5"/><rect x="4" y="4" width="5" height="4" fill="#fff" stroke="#6030b0"/><path d="M6 10L8 8H12L13 9H15L14 15H6Z" fill="#f0d030" stroke="#806000"/></svg>
<div style="left:194px;top:73px;width:2px;height:19px;border-left:1px solid #a0a0a0;border-right:1px solid #fff;"></div>
<svg style="left:200px;top:74px;" width="16" height="16" viewBox="0 0 16 16"><rect x="2" y="3" width="12" height="10" fill="#b8b8b8" stroke="#888"/><rect x="4" y="5" width="8" height="5" fill="#d8d8d8"/></svg>
<svg style="left:226px;top:74px;" width="16" height="16" viewBox="0 0 16 16"><rect x="1.5" y="4.5" width="13" height="10" fill="#d0e8f8" stroke="#506070"/><rect x="3" y="7" width="10" height="6" fill="#4080c0"/><path d="M6 5L11 1V3H15V7H11V9Z" fill="#e02020"/></svg>
<div style="left:249px;top:73px;width:2px;height:19px;border-left:1px solid #a0a0a0;border-right:1px solid #fff;"></div>
<svg style="left:254px;top:74px;" width="16" height="16" viewBox="0 0 16 16"><path d="M13 3L5 11L3 9V14H8L6 12L14 4Z" fill="#a8a8a8" stroke="#c0c0c0" stroke-width=".5"/></svg>
<svg style="left:281px;top:74px;" width="16" height="16" viewBox="0 0 16 16"><path d="M3 3L11 11L13 9V14H8L10 12L2 4Z" fill="#a8a8a8" stroke="#c0c0c0" stroke-width=".5"/></svg>
<div style="left:304px;top:73px;width:2px;height:19px;border-left:1px solid #a0a0a0;border-right:1px solid #fff;"></div>
<svg style="left:308px;top:74px;" width="16" height="16" viewBox="0 0 16 16"><path d="M6 1L8 9M10 1L8 9" stroke="#999" stroke-width="1.5"/><circle cx="5.5" cy="12" r="2.5" fill="none" stroke="#999" stroke-width="1.5"/><circle cx="10.5" cy="12" r="2.5" fill="none" stroke="#999" stroke-width="1.5"/></svg>
<svg style="left:335px;top:74px;" width="16" height="16" viewBox="0 0 16 16"><rect x="1.5" y="2.5" width="8" height="8" fill="#e0e0e0" stroke="#999"/><rect x="5.5" y="6.5" width="9" height="8" fill="#e8e8e8" stroke="#999"/></svg>
<svg style="left:361px;top:74px;" width="16" height="16" viewBox="0 0 16 16"><rect x="1.5" y="2.5" width="10" height="12" fill="#c0a070" stroke="#6a5030"/><rect x="4" y="1" width="5" height="3" fill="#ddd" stroke="#555"/><rect x="6.5" y="8.5" width="8" height="6" fill="#fff" stroke="#2a3a9a"/></svg>
<svg style="left:388px;top:74px;" width="16" height="16" viewBox="0 0 16 16"><rect x="9.5" y="1.5" width="5" height="12" fill="#e0e0e0" stroke="#aaa"/><rect x="1.5" y="5.5" width="7" height="6" fill="#ddd" stroke="#999"/><path d="M4 8H12" stroke="#888"/></svg>
<svg style="left:413px;top:74px;" width="16" height="16" viewBox="0 0 16 16"><path d="M2 2L14 14M14 2L2 14" stroke="#808080" stroke-width="2.5"/></svg>
<div style="left:438px;top:73px;width:2px;height:19px;border-left:1px solid #a0a0a0;border-right:1px solid #fff;"></div>
<svg style="left:441px;top:74px;" width="16" height="16" viewBox="0 0 16 16"><text x="1" y="6" font-size="6" font-family="Liberation Sans" font-weight="bold" fill="#000">ALL</text><path d="M2 9L6 14L15 4" stroke="#1a2a9a" stroke-width="2.5" fill="none"/></svg>
<svg style="left:594px;top:74px;" width="16" height="16" viewBox="0 0 16 16"><rect x="1.5" y="1.5" width="13" height="13" fill="#fff" stroke="#10208a" stroke-width="2"/><path d="M6 10L12 4M8 4H12V8" stroke="#10208a" stroke-width="1.5" fill="none"/></svg>
<div style="left:616px;top:73px;width:3px;height:19px;background:repeating-linear-gradient(#fff 0 1px,#808080 1px 2px,transparent 2px 3px);opacity:.8"></div>
<svg style="left:624px;top:74px;" width="16" height="16" viewBox="0 0 16 16"><rect x="7" y="1" width="8" height="12" fill="#f0e090" stroke="#a09040"/><circle cx="5" cy="10" r="4" fill="#d03030"/><rect x="2" y="10" width="6" height="5" fill="#b02020"/></svg>
<svg style="left:650px;top:74px;" width="16" height="16" viewBox="0 0 16 16"><rect x="7" y="1" width="8" height="12" fill="#f0e090" stroke="#a09040"/><rect x="1" y="8" width="7" height="6" fill="#6030c0"/><path d="M4 11L9 16" stroke="#303060" stroke-width="1.5"/></svg>
<svg style="left:676px;top:74px;" width="16" height="16" viewBox="0 0 16 16"><path d="M2.5 1.5H10L13.5 5V14.5H2.5Z" fill="#fff" stroke="#333"/><text x="2.5" y="7" font-size="5" font-family="Liberation Sans" fill="#2050b0">CSV</text></svg>
<svg style="left:702px;top:74px;" width="16" height="16" viewBox="0 0 16 16"><rect x="1.5" y="4.5" width="9" height="10" fill="#fff" stroke="#2a3a8a"/><rect x="4.5" y="2.5" width="9" height="10" fill="#e0e8ff" stroke="#2a3a8a"/><path d="M12 1V8M9 4L12 1L15 4" stroke="#e02020" stroke-width="1.5" fill="none"/></svg>
<svg style="left:728px;top:74px;" width="16" height="16" viewBox="0 0 16 16"><circle cx="4" cy="7" r="3" fill="none" stroke="#a0a030" stroke-width="2"/><path d="M7 7H15M12 7V10M14 7V10" stroke="#a0a030" stroke-width="2"/></svg>
<svg style="left:754px;top:74px;" width="16" height="16" viewBox="0 0 16 16"><circle cx="8" cy="8" r="7" fill="#f0d020" stroke="#806010"/><rect x="7" y="6" width="2.5" height="6" fill="#000"/><circle cx="8.2" cy="4" r="1.3" fill="#000"/></svg>
<svg style="left:781px;top:74px;" width="16" height="16" viewBox="0 0 16 16"><rect x="6" y="1" width="9" height="11" rx="3" fill="#c0e0f0" stroke="#506080"/><rect x="6" y="7" width="9" height="6" fill="#d04040"/><path d="M1 11L5 7L8 10V15H3Z" fill="#f0a040" stroke="#804000" stroke-width=".6"/></svg>
<svg style="left:806px;top:74px;" width="16" height="16" viewBox="0 0 16 16"><rect x="1" y="1" width="7" height="7" fill="#fff" stroke="#333" stroke-width=".8"/><circle cx="10" cy="10" r="5.5" fill="#5070d0" stroke="#203080"/><circle cx="10" cy="10" r="3" fill="#fff"/></svg>
<svg style="left:831px;top:74px;" width="16" height="16" viewBox="0 0 16 16"><path d="M2 5H6L12 1V15L6 11H2Z" fill="#f0e070" stroke="#908020"/></svg>
<svg style="left:858px;top:74px;" width="16" height="16" viewBox="0 0 16 16"><rect x="1.5" y="1.5" width="8" height="8" fill="#fff" stroke="#2a3a9a"/><text x="2.5" y="8" font-size="7" font-family="Liberation Sans" font-weight="bold" fill="#000">A</text><rect x="7.5" y="7.5" width="7" height="7" fill="#d0d8ff" stroke="#2a3a9a"/></svg>
<svg style="left:884px;top:74px;" width="16" height="16" viewBox="0 0 16 16"><circle cx="8" cy="8" r="7" fill="#6080e0" stroke="#203090"/><circle cx="8" cy="8" r="4.5" fill="#a0b8ff"/><text x="5" y="11" font-size="8" font-family="Liberation Sans" font-weight="bold" fill="#102060">D</text></svg>
<svg style="left:910px;top:74px;" width="16" height="16" viewBox="0 0 16 16"><path d="M1 6L7 2L14 6V12H1Z" fill="#e8e070" stroke="#808030"/><rect x="8" y="8" width="7" height="7" fill="#3070c0" stroke="#fff" stroke-width=".6"/></svg>
<div style="left:933px;top:73px;width:2px;height:19px;border-left:1px solid #a0a0a0;border-right:1px solid #fff;"></div>
<svg style="left:938px;top:74px;" width="16" height="16" viewBox="0 0 16 16"><rect x="1.5" y="2.5" width="13" height="11" fill="#f08040" stroke="#806040"/><rect x="3" y="4" width="10" height="8" fill="#f0a050"/><path d="M3 4L13 12" stroke="#e04060" stroke-width="3" opacity=".4"/></svg>
<div style="left:962px;top:73px;width:2px;height:19px;border-left:1px solid #a0a0a0;border-right:1px solid #fff;"></div>
<svg style="left:967px;top:74px;" width="16" height="16" viewBox="0 0 16 16"><rect x="7" y="1" width="8" height="12" fill="#f0e090" stroke="#a09040"/><rect x="1" y="6" width="9" height="8" fill="#408040"/><path d="M2 14L6 9L9 14" fill="#80c060"/></svg>
<svg style="left:994px;top:74px;" width="16" height="16" viewBox="0 0 16 16"><rect x="2.5" y="1.5" width="11" height="13" fill="#fff" stroke="#444"/><path d="M4 5H10M4 8H10M4 11H10" stroke="#888"/><path d="M9 13L15 2" stroke="#20a040" stroke-width="2.5"/></svg>
<svg style="left:1020px;top:74px;" width="16" height="16" viewBox="0 0 16 16"><path d="M4 6A4 4 0 0 1 12 6H10V9L13 14H9L8 11L7 14H3L6 9V6Z" fill="#000"/><circle cx="8" cy="4" r="2" fill="#fff"/></svg>
<svg style="left:1045px;top:74px;" width="16" height="16" viewBox="0 0 16 16"><rect x="2" y="1" width="11" height="14" fill="#555"/><path d="M2 4H13M2 7H13M2 10H13M5 1V15M8 1V15" stroke="#aaa" stroke-width=".8"/><path d="M11 7L15 12L12 12Z" fill="#fff" stroke="#000" stroke-width=".5"/></svg>
<svg style="left:1071px;top:74px;" width="16" height="16" viewBox="0 0 16 16"><rect x="1" y="4" width="9" height="10" fill="#000"/><rect x="3" y="6" width="5" height="6" fill="#ddd"/><rect x="8" y="1" width="7" height="11" fill="#f0e090" stroke="#a09040"/></svg>
<svg style="left:1098px;top:74px;" width="16" height="16" viewBox="0 0 16 16"><rect x="1.5" y="4.5" width="10" height="8" fill="#ddd" stroke="#333"/><path d="M11 7L15 5V12L11 10Z" fill="#333"/><circle cx="5" cy="8" r="2" fill="#333"/></svg>
<svg style="left:1125px;top:74px;" width="16" height="16" viewBox="0 0 16 16"><rect x="1.5" y="1.5" width="10" height="10" fill="#fff" stroke="#000"/><rect x="3.5" y="3.5" width="10" height="10" fill="#fff" stroke="#000"/><rect x="5.5" y="5.5" width="9" height="9" fill="#fff" stroke="#000" stroke-width="1.5"/><text x="7" y="13" font-size="7" font-family="Liberation Sans" font-weight="bold">F</text></svg>
<div style="left:1147px;top:73px;width:2px;height:19px;border-left:1px solid #a0a0a0;border-right:1px solid #fff;"></div>
<svg style="left:1153px;top:74px;" width="16" height="16" viewBox="0 0 16 16"><path d="M3 15L9 1L14 12Z" fill="#e0b060" stroke="#906020"/><path d="M3 15L9 1" stroke="#604010" stroke-width="1.5"/></svg>
<div style="left:468px;top:72px;width:120px;height:21px;background:#fff;border-top:1px solid #808080;border-left:1px solid #808080;border-right:1px solid #fff;border-bottom:1px solid #fff;box-shadow:inset 1px 1px 0 #404040;"></div>
<div class="t" style="left:473px;top:76px;font-size:12px;">100%</div>
<div style="left:574px;top:74px;width:13px;height:17px;background:#d4d0c8;border-top:1px solid #fff;border-left:1px solid #fff;border-right:1px solid #404040;border-bottom:1px solid #404040;box-shadow:inset -1px -1px 0 #808080;"></div>
<svg style="left:578px;top:81px;" width="6" height="3" viewBox="0 0 6 3"><path d="M0 0H5L2.5 3Z" fill="#000"/></svg>
<div style="left:5px;top:96px;width:26px;height:26px;background:#ecebe6;border:1px solid;border-color:#808080 #fff #fff #808080;"></div>
<svg style="left:9px;top:100px;" width="16" height="16" viewBox="0 0 16 16"><path d="M4 1V13L7 10L9.5 15L11.5 14L9 9H13Z" fill="#fff" stroke="#000" stroke-width="1"/></svg>
<svg style="left:38px;top:100px;" width="16" height="16" viewBox="0 0 16 16"><text x="1" y="14" font-size="16" font-family="Liberation Serif" font-weight="bold" fill="#000">A</text></svg>
<div style="left:61px;top:98px;width:2px;height:21px;border-left:1px solid #a0a0a0;border-right:1px solid #fff;"></div>
<svg style="left:66px;top:100px;" width="16" height="16" viewBox="0 0 16 16"><rect x="6" y="6" width="4" height="4" fill="#000"/></svg>
<svg style="left:92px;top:100px;" width="16" height="16" viewBox="0 0 16 16"><path d="M2 14L14 2" stroke="#000" stroke-width="1.2"/></svg>
<svg style="left:118px;top:100px;" width="16" height="16" viewBox="0 0 16 16"><path d="M1 12L5 8L8 11L13 4" stroke="#000" stroke-width="1.2" fill="none"/><path d="M11 4L15 2L14 6Z" fill="#000"/></svg>
<svg style="left:144px;top:100px;" width="16" height="16" viewBox="0 0 16 16"><rect x="1.5" y="2.5" width="13" height="11" fill="none" stroke="#000" stroke-width="1.6"/></svg>
<svg style="left:170px;top:100px;" width="16" height="16" viewBox="0 0 16 16"><path d="M8 1.5L14.5 6L12 14.5H4L1.5 6Z" fill="none" stroke="#000" stroke-width="1.4"/></svg>
<svg style="left:196px;top:100px;" width="16" height="16" viewBox="0 0 16 16"><ellipse cx="8" cy="8" rx="7" ry="5" fill="none" stroke="#000" stroke-width="1.4"/></svg>
<svg style="left:222px;top:100px;" width="16" height="16" viewBox="0 0 16 16"><path d="M2 14Q3 5 12 3" stroke="#000" stroke-width="1.4" fill="none"/></svg>
<svg style="left:248px;top:100px;" width="16" height="16" viewBox="0 0 16 16"><rect x="6" y="1" width="3" height="15" fill="#000"/><path d="M9 3H12M9 6H12M9 9H12M9 12H12" stroke="#000" stroke-width="1.2"/></svg>
<svg style="left:274px;top:100px;" width="16" height="16" viewBox="0 0 16 16"><rect x="0.5" y="3.5" width="15" height="10" fill="#20a0a0" stroke="#333"/><rect x="2" y="5" width="12" height="7" fill="#40c0d0"/><path d="M2 12L6 7L9 12Z" fill="#208040"/></svg>
<svg style="left:300px;top:100px;" width="16" height="16" viewBox="0 0 16 16"><rect x="1" y="1" width="14" height="14" fill="#4a80c0"/><rect x="4" y="5" width="8" height="6" fill="#fff"/><rect x="1" y="1" width="4" height="4" fill="#2a5a9a"/><rect x="11" y="1" width="4" height="4" fill="#2a5a9a"/><rect x="1" y="11" width="4" height="4" fill="#2a5a9a"/><rect x="11" y="11" width="4" height="4" fill="#2a5a9a"/></svg>
<div style="left:323px;top:98px;width:2px;height:21px;border-left:1px solid #a0a0a0;border-right:1px solid #fff;"></div>
<svg style="left:329px;top:100px;" width="16" height="16" viewBox="0 0 16 16"><rect x="1.5" y="2.5" width="13" height="11" fill="#fff" stroke="#000" stroke-width="1.4"/><path d="M1 6H15M1 9H15M1 12H15M6 3V14" stroke="#000" stroke-width="1.4"/></svg>
<div style="left:352px;top:98px;width:3px;height:21px;background:repeating-linear-gradient(#fff 0 1px,#808080 1px 2px,transparent 2px 3px);opacity:.8"></div>
<svg style="left:361px;top:100px;" width="16" height="16" viewBox="0 0 16 16"><ellipse cx="8" cy="12" rx="7" ry="3" fill="#e8e8e8" stroke="#aaa"/><ellipse cx="8" cy="7" rx="6" ry="5" fill="#20c020" stroke="#107010"/><ellipse cx="7" cy="5" rx="3" ry="1.5" fill="#80f080"/></svg>
<div style="left:381px;top:96px;width:9px;height:24px;border:1px solid;border-color:#fff #808080 #808080 #fff;"></div>
<svg style="left:383px;top:107px;" width="5" height="3" viewBox="0 0 5 3"><path d="M0 0H5L2.5 3Z" fill="#000"/></svg>
<svg style="left:395px;top:100px;" width="16" height="16" viewBox="0 0 16 16"><circle cx="8" cy="6" r="5" fill="#f8f070" stroke="#808030"/><rect x="6" y="11" width="4" height="4" fill="#806040"/></svg>
<div style="left:416px;top:96px;width:9px;height:24px;border:1px solid;border-color:#fff #808080 #808080 #fff;"></div>
<svg style="left:418px;top:107px;" width="5" height="3" viewBox="0 0 5 3"><path d="M0 0H5L2.5 3Z" fill="#000"/></svg>
<svg style="left:428px;top:100px;" width="16" height="16" viewBox="0 0 16 16"><rect x="1" y="2" width="14" height="12" fill="#fff" stroke="#000"/><rect x="2" y="3" width="6" height="5" fill="#40c0e0"/><rect x="9" y="3" width="5" height="5" fill="#2050d0"/><path d="M10 4H13L11.5 6Z" fill="#fff"/><path d="M2 10H14M2 12H14" stroke="#000" stroke-width=".8"/></svg>
<div style="left:451px;top:98px;width:2px;height:21px;border-left:1px solid #a0a0a0;border-right:1px solid #fff;"></div>
<svg style="left:458px;top:100px;" width="16" height="16" viewBox="0 0 16 16"><rect x="0.5" y="2.5" width="15" height="11" fill="#fff" stroke="#4060b0"/><text x="1.5" y="11" font-size="7" font-family="Liberation Sans" font-weight="bold" fill="#102070">123</text></svg>
<div style="left:479px;top:96px;width:9px;height:24px;border:1px solid;border-color:#fff #808080 #808080 #fff;"></div>
<svg style="left:481px;top:107px;" width="5" height="3" viewBox="0 0 5 3"><path d="M0 0H5L2.5 3Z" fill="#000"/></svg>
<svg style="left:496px;top:100px;" width="16" height="16" viewBox="0 0 16 16"><rect x="3" y="1" width="10" height="14" fill="#444"/><path d="M3 4H13M3 7H13M3 10H13M3 13H13M6 1V15M9 1V15" stroke="#bbb" stroke-width=".7"/></svg>
<svg style="left:521px;top:100px;" width="16" height="16" viewBox="0 0 16 16"><path d="M1 12L5 6H15L11 12Z" fill="#fff" stroke="#333"/><path d="M11 12L15 6V8L12 13Z" fill="#999"/></svg>
<div style="left:542px;top:96px;width:9px;height:24px;border:1px solid;border-color:#fff #808080 #808080 #fff;"></div>
<svg style="left:544px;top:107px;" width="5" height="3" viewBox="0 0 5 3"><path d="M0 0H5L2.5 3Z" fill="#000"/></svg>
<svg style="left:558px;top:100px;" width="16" height="16" viewBox="0 0 16 16"><rect x="2" y="4" width="3" height="10" fill="#2040c0"/><rect x="5" y="2" width="3" height="12" fill="#e0c020"/><rect x="8" y="5" width="3" height="9" fill="#d04040"/><rect x="11" y="3" width="3" height="11" fill="#c04060"/><path d="M1 14H15" stroke="#333"/></svg>
<div style="left:579px;top:96px;width:9px;height:24px;border:1px solid;border-color:#fff #808080 #808080 #fff;"></div>
<svg style="left:581px;top:107px;" width="5" height="3" viewBox="0 0 5 3"><path d="M0 0H5L2.5 3Z" fill="#000"/></svg>
<svg style="left:592px;top:100px;" width="16" height="16" viewBox="0 0 16 16"><rect x="0.5" y="0.5" width="15" height="15" fill="#fff" stroke="#2a4aa0"/><path d="M2 13L6 6L10 10L14 3" stroke="#a08020" fill="none"/><path d="M2 13L5 10L9 12L14 8" stroke="#c04080" fill="none"/><path d="M2 2V14H14" stroke="#000" fill="none"/></svg>
<div style="left:613px;top:96px;width:9px;height:24px;border:1px solid;border-color:#fff #808080 #808080 #fff;"></div>
<svg style="left:615px;top:107px;" width="5" height="3" viewBox="0 0 5 3"><path d="M0 0H5L2.5 3Z" fill="#000"/></svg>
<svg style="left:626px;top:100px;" width="16" height="16" viewBox="0 0 16 16"><rect x="0.5" y="0.5" width="15" height="15" fill="#fff" stroke="#2a4aa0"/><path d="M2 12L6 6L10 10L14 4" stroke="#b09020" fill="none"/><path d="M2 2V14H14" stroke="#000" fill="none"/></svg>
<div style="left:647px;top:96px;width:9px;height:24px;border:1px solid;border-color:#fff #808080 #808080 #fff;"></div>
<svg style="left:649px;top:107px;" width="5" height="3" viewBox="0 0 5 3"><path d="M0 0H5L2.5 3Z" fill="#000"/></svg>
<svg style="left:660px;top:100px;" width="16" height="16" viewBox="0 0 16 16"><path d="M8 1V15M1 8H15" stroke="#c01010" stroke-width="1.6"/><path d="M8 3L13 8L8 13L3 8Z" fill="none" stroke="#c01010" stroke-width="1.6"/><path d="M8 8L11 15" stroke="#c01010" stroke-width="1.6"/></svg>
<svg style="left:686px;top:100px;" width="16" height="16" viewBox="0 0 16 16"><path d="M8 1V15M1 8H15" stroke="#601010" stroke-width="1.6"/><path d="M8 3L13 8L8 13L3 8Z" fill="none" stroke="#601010" stroke-width="1.6"/></svg>
<div style="left:709px;top:98px;width:2px;height:21px;border-left:1px solid #a0a0a0;border-right:1px solid #fff;"></div>
<svg style="left:715px;top:100px;" width="16" height="16" viewBox="0 0 16 16"><ellipse cx="8" cy="13" rx="6" ry="2.5" fill="#c8a8a8" stroke="#666"/><path d="M3 13V7A5 5 0 0 1 13 7V13Z" fill="#e01010"/><ellipse cx="6" cy="6" rx="1.5" ry="2" fill="#ff8080"/></svg>
<svg style="left:741px;top:100px;" width="16" height="16" viewBox="0 0 16 16"><path d="M2.5 1.5H10L13.5 5V14.5H2.5Z" fill="#fff" stroke="#555"/><path d="M4 5H9M4 7H10M4 9H8" stroke="#888"/><rect x="9" y="9" width="6" height="6" fill="#d03030"/></svg>
<svg style="left:767px;top:100px;" width="16" height="16" viewBox="0 0 16 16"><rect x="0.5" y="1.5" width="15" height="13" fill="#fff" stroke="#2a4aa0"/><text x="1" y="12" font-size="7" font-family="Liberation Sans" fill="#000">a</text><text x="5.5" y="9" font-size="7" font-family="Liberation Sans" fill="#000">b</text><text x="10" y="7" font-size="7" font-family="Liberation Sans" fill="#000">c</text></svg>
<div style="left:788px;top:96px;width:9px;height:24px;border:1px solid;border-color:#fff #808080 #808080 #fff;"></div>
<svg style="left:790px;top:107px;" width="5" height="3" viewBox="0 0 5 3"><path d="M0 0H5L2.5 3Z" fill="#000"/></svg>
<div style="left:799px;top:98px;width:2px;height:21px;border-left:1px solid #a0a0a0;border-right:1px solid #fff;"></div>
<svg style="left:803px;top:100px;" width="16" height="16" viewBox="0 0 16 16"><rect x="0.5" y="3.5" width="15" height="10" fill="#fff" stroke="#000"/><rect x="1" y="4" width="14" height="3" fill="#000"/><rect x="1" y="7" width="14" height="6" fill="#c8c8c8"/></svg>
<svg style="left:830px;top:100px;" width="16" height="16" viewBox="0 0 16 16"><rect x="0" y="1" width="7" height="13" fill="#000"/><rect x="2" y="3" width="3" height="9" fill="#ddd"/><rect x="8" y="3" width="8" height="12" fill="#000"/><rect x="10" y="5" width="4" height="8" fill="#ddd"/></svg>
<svg style="left:855px;top:100px;" width="16" height="16" viewBox="0 0 16 16"><rect x="1" y="6" width="11" height="9" fill="#8050e0" stroke="#402080"/><rect x="7" y="2" width="9" height="6" fill="#c8c8c8" stroke="#444"/><rect x="3" y="2" width="3" height="6" fill="#444"/></svg>
<svg style="left:882px;top:100px;" width="16" height="16" viewBox="0 0 16 16"><rect x="1.5" y="1.5" width="13" height="10" fill="#80d0e0" stroke="#406070"/><rect x="5" y="4" width="6" height="5" fill="#fff" stroke="#333" stroke-width=".6"/><path d="M8 12V14M3 15H13" stroke="#333" stroke-width="1.5"/></svg>
<svg style="left:908px;top:100px;" width="16" height="16" viewBox="0 0 16 16"><path d="M1 10L7 2L11 4L5 12Z" fill="#e06080"/><path d="M7 2L12 1L12 10L7 10Z" fill="#a040c0"/><path d="M6 14L10 9L15 12L11 15Z" fill="#20a060"/></svg>
<div style="left:931px;top:98px;width:2px;height:21px;border-left:1px solid #a0a0a0;border-right:1px solid #fff;"></div>
<svg style="left:936px;top:100px;" width="16" height="16" viewBox="0 0 16 16"><rect x="1.5" y="1.5" width="13" height="11" fill="#fff" stroke="#6030c0" stroke-width="2.5"/><path d="M5 15V8M3 10L5 8L7 10M10 15V8M8 10L10 8L12 10" stroke="#000" stroke-width="1.2" fill="none"/></svg>
<svg style="left:963px;top:100px;" width="16" height="16" viewBox="0 0 16 16"><rect x="0.5" y="1.5" width="15" height="13" fill="#fff" stroke="#3050b0"/><path d="M2 5H14M2 8H14M2 11H14" stroke="#000" stroke-width=".8" stroke-dasharray="1 .5"/></svg>
<div style="left:986px;top:98px;width:2px;height:21px;border-left:1px solid #a0a0a0;border-right:1px solid #fff;"></div>
<svg style="left:991px;top:100px;" width="16" height="16" viewBox="0 0 16 16"><path d="M6 1V9L4 8L3 10L7 15H12L13 10V7H8V1Z" fill="#fff" stroke="#000" stroke-width=".9"/><rect x="6" y="13" width="7" height="3" fill="#3050b0"/></svg>
<svg style="left:1018px;top:100px;" width="16" height="16" viewBox="0 0 16 16"><rect x="1" y="1" width="11" height="11" rx="2" fill="#2050b0"/><text x="3" y="10" font-size="8" font-family="Liberation Sans" font-weight="bold" fill="#fff">D</text><rect x="9" y="9" width="7" height="7" fill="#60a0e0" stroke="#fff" stroke-width=".5"/></svg>
<div style="left:1041px;top:98px;width:3px;height:21px;background:repeating-linear-gradient(#fff 0 1px,#808080 1px 2px,transparent 2px 3px);opacity:.8"></div>
<svg style="left:1049px;top:100px;" width="16" height="16" viewBox="0 0 16 16"><path d="M2 3H14V12A6 4 0 0 1 2 12Z" fill="#d8e8f0" stroke="#8090a0"/><circle cx="6" cy="9" r="2" fill="#d03030"/><circle cx="10" cy="8" r="2" fill="#3050c0"/><circle cx="8" cy="11" r="2" fill="#30a040"/></svg>
<svg style="left:9px;top:125px;" width="16" height="16" viewBox="0 0 16 16"><path d="M2 2V15M14 2V15M2 4H14M2 14H14" stroke="#888" stroke-width="1.2"/><circle cx="9" cy="4" r="1.5" fill="none" stroke="#888"/><path d="M1 9H6L4 7M6 9L4 11" stroke="#999" stroke-width="2"/></svg>
<svg style="left:34px;top:125px;" width="16" height="16" viewBox="0 0 16 16"><path d="M1 3H15" stroke="#777" stroke-width="2"/><path d="M3 3V14H13V8" stroke="#777" stroke-width="2.4" fill="none"/><path d="M10 13V7H8L11 4L14 7H12" fill="#777"/></svg>
<svg style="left:61px;top:125px;" width="16" height="16" viewBox="0 0 16 16"><path d="M2 5H14V12H4L1 8Z" fill="#e8e8e8" stroke="#888"/><circle cx="5" cy="8.5" r="1.2" fill="none" stroke="#888"/><text x="8" y="11" font-size="6" font-family="Liberation Sans" fill="#888">L</text></svg>
<div style="left:84px;top:124px;width:2px;height:20px;border-left:1px solid #a0a0a0;border-right:1px solid #fff;"></div>
<svg style="left:89px;top:125px;" width="16" height="16" viewBox="0 0 16 16"><path d="M1 8H5M11 8H15M5 3V13M11 3V13" stroke="#888" stroke-width="2"/></svg>
<svg style="left:115px;top:125px;" width="16" height="16" viewBox="0 0 16 16"><path d="M1 8H5M11 8H15M5 3V13M11 3V13M4 13L12 3" stroke="#888" stroke-width="2"/></svg>
<svg style="left:142px;top:125px;" width="16" height="16" viewBox="0 0 16 16"><path d="M1 8H4M12 8H15" stroke="#888" stroke-width="1.5"/><circle cx="8" cy="8" r="4" fill="none" stroke="#888" stroke-width="1.5"/></svg>
<svg style="left:168px;top:125px;" width="16" height="16" viewBox="0 0 16 16"><path d="M2 6A6 5 0 0 1 14 6" stroke="#999" fill="none"/><path d="M6 15H8V9H10" stroke="#999" stroke-width="1.5" fill="none"/><path d="M5 6L7 7M9 6L11 5" stroke="#999"/></svg>
<svg style="left:194px;top:125px;" width="16" height="16" viewBox="0 0 16 16"><path d="M2 6A6 5 0 0 1 14 6" stroke="#999" fill="none"/><path d="M6 9H8V15H10" stroke="#999" stroke-width="1.5" fill="none"/><path d="M5 6L7 7M9 6L11 5" stroke="#999"/></svg>
<svg style="left:220px;top:125px;" width="16" height="16" viewBox="0 0 16 16"><rect x="1" y="1" width="14" height="6" fill="#666"/><path d="M5 1V7M10 1V7" stroke="#aaa"/><path d="M8 7V14M5 11L8 14L11 11" stroke="#999" stroke-width="1.5" fill="none"/></svg>
<svg style="left:246px;top:125px;" width="16" height="16" viewBox="0 0 16 16"><rect x="1" y="1" width="14" height="6" fill="#666"/><path d="M5 1V7M10 1V7" stroke="#aaa"/><path d="M8 8V15M5 11L8 8L11 11" stroke="#999" stroke-width="1.5" fill="none"/></svg>
<div style="left:0px;top:151px;width:246px;height:18px;border:1px solid #8c8a84;background:#d4d0c8;"></div>
<div class="t" style="left:5px;top:154px;"><svg class="g" width="48" height="10" viewBox="0 2 48 10"><text class="h">畫面清單</text><use href="#g12" x="0"/><use href="#g13" x="12"/><use href="#g32" x="24"/><use href="#g33" x="36"/></svg></div>
<svg style="left:217px;top:153px;" width="10" height="12" viewBox="0 0 10 12"><path d="M2 1H8M3 1V7M7 1V7M1 7H9M5 7V11" stroke="#000" stroke-width="1.3" fill="none"/></svg>
<svg style="left:231px;top:154px;" width="10" height="10" viewBox="0 0 10 10"><path d="M1 1L9 9M9 1L1 9" stroke="#000" stroke-width="2.2"/></svg>
<div style="left:0px;top:174px;width:246px;height:28px;background:#fffdf6;"></div>
<div style="left:0px;top:205px;width:246px;height:28px;background:#fffdf6;"></div>
<div style="left:0px;top:235px;width:246px;height:30px;background:#fffdf6;"></div>
<div style="left:0px;top:267px;width:246px;height:30px;background:#fffdf6;"></div>
<div class="t" style="left:5px;top:182px;"><svg class="g" width="48" height="10" viewBox="0 2 48 10"><text class="h">畫面型式</text><use href="#g12" x="0"/><use href="#g13" x="12"/><use href="#g34" x="24"/><use href="#g35" x="36"/></svg></div>
<div class="t" style="left:5px;top:213px;"><svg class="g" width="48" height="10" viewBox="0 2 48 10"><text class="h">搜尋方式</text><use href="#g36" x="0"/><use href="#g37" x="12"/><use href="#g38" x="24"/><use href="#g35" x="36"/></svg></div>
<div class="t" style="left:5px;top:244px;"><svg class="g" width="48" height="10" viewBox="0 2 48 10"><text class="h">細部搜尋</text><use href="#g39" x="0"/><use href="#g40" x="12"/><use href="#g36" x="24"/><use href="#g37" x="36"/></svg></div>
<div style="left:107px;top:178px;width:135px;height:20px;background:#fff;border-top:1px solid #808080;border-left:1px solid #808080;border-right:1px solid #fff;border-bottom:1px solid #fff;box-shadow:inset 1px 1px 0 #404040;"></div>
<div class="t" style="left:111px;top:182px;font-size:12px;"><svg class="g" width="24" height="10" viewBox="0 2 24 10"><text class="h">所有</text><use href="#g41" x="0"/><use href="#g42" x="12"/></svg></div>
<div style="left:225px;top:180px;width:15px;height:16px;background:#d4d0c8;border-top:1px solid #fff;border-left:1px solid #fff;border-right:1px solid #404040;border-bottom:1px solid #404040;box-shadow:inset -1px -1px 0 #808080;"></div>
<svg style="left:229px;top:187px;" width="8" height="4" viewBox="0 0 8 4"><path d="M0 0H7L3.5 4Z" fill="#000"/></svg>
<div style="left:107px;top:208px;width:135px;height:20px;background:#fff;border-top:1px solid #808080;border-left:1px solid #808080;border-right:1px solid #fff;border-bottom:1px solid #fff;box-shadow:inset 1px 1px 0 #404040;"></div>
<div class="t" style="left:111px;top:212px;font-size:12px;"><svg class="g" width="24" height="10" viewBox="0 2 24 10"><text class="h">標題</text><use href="#g43" x="0"/><use href="#g44" x="12"/></svg></div>
<div style="left:225px;top:210px;width:15px;height:16px;background:#d4d0c8;border-top:1px solid #fff;border-left:1px solid #fff;border-right:1px solid #404040;border-bottom:1px solid #404040;box-shadow:inset -1px -1px 0 #808080;"></div>
<svg style="left:229px;top:217px;" width="8" height="4" viewBox="0 0 8 4"><path d="M0 0H7L3.5 4Z" fill="#000"/></svg>
<div style="left:107px;top:242px;width:85px;height:20px;background:#fff;border-top:1px solid #808080;border-left:1px solid #808080;border-right:1px solid #fff;border-bottom:1px solid #fff;box-shadow:inset 1px 1px 0 #404040;"></div>
<div style="left:195px;top:241px;width:48px;height:21px;background:#d4d0c8;border-top:1px solid #fff;border-left:1px solid #fff;border-right:1px solid #404040;border-bottom:1px solid #404040;box-shadow:inset -1px -1px 0 #808080;"></div>
<div class="t" style="left:207px;top:245px;color:#a0a0a0;"><svg class="g" width="24" height="10" viewBox="0 2 24 10"><text class="h">搜尋</text><use href="#g36" x="0"/><use href="#g37" x="12"/></svg></div>
<svg style="left:4px;top:273px;" width="16" height="16" viewBox="0 0 16 16"><rect x="3.5" y="4.5" width="10" height="9" fill="#fff" stroke="#7040c0" stroke-width="2"/><rect x="6" y="7" width="5" height="4" fill="#e8e0ff"/><path d="M1 1L3 3M3 1L1 3" stroke="#333"/></svg>
<svg style="left:27px;top:273px;" width="16" height="16" viewBox="0 0 16 16"><rect x="1.5" y="1.5" width="9" height="8" fill="#d8d0f8" stroke="#6040c0"/><rect x="5.5" y="5.5" width="9" height="8" fill="#e8e0ff" stroke="#6040c0"/></svg>
<svg style="left:49px;top:273px;" width="16" height="16" viewBox="0 0 16 16"><rect x="1" y="3" width="10" height="10" fill="#808080"/><rect x="5" y="6" width="10" height="9" fill="#909090"/></svg>
<svg style="left:72px;top:273px;" width="16" height="16" viewBox="0 0 16 16"><path d="M2 2L14 14M14 2L2 14" stroke="#000" stroke-width="2.5"/></svg>
<div style="left:96px;top:272px;width:1px;height:18px;background:#a0a0a0;"></div>
<svg style="left:103px;top:273px;" width="16" height="16" viewBox="0 0 16 16"><rect x="1.5" y="1.5" width="13" height="10" fill="#80d0e0" stroke="#406070"/><rect x="5" y="4" width="6" height="5" fill="#fff" stroke="#333" stroke-width=".6"/><path d="M8 12V14M3 15H13" stroke="#333" stroke-width="1.5"/></svg>
<svg style="left:127px;top:273px;" width="16" height="16" viewBox="0 0 16 16"><rect x="6" y="1" width="9" height="11" fill="#fff" stroke="#555"/><path d="M1 6L6 2V5H9V9H6V12Z" fill="#e03030"/><rect x="1" y="9" width="7" height="6" fill="#30a040"/></svg>
<svg style="left:150px;top:273px;" width="16" height="16" viewBox="0 0 16 16"><rect x="1" y="1" width="9" height="8" fill="#507060"/><rect x="3" y="3" width="5" height="4" fill="#a0e0b0"/><rect x="6" y="7" width="9" height="8" fill="#305080"/><rect x="8" y="9" width="5" height="4" fill="#a0d0f0"/></svg>
<div style="left:0px;top:299px;width:246px;height:5px;background:#fffdf6;"></div>
<div style="left:0px;top:304px;width:246px;height:467px;background:#fdfaf0;border:1px solid #000;border-right-color:#000;"></div>
<div style="left:1px;top:379px;width:226px;height:50px;background:#d3e1f8;"></div>
<div class="t" style="left:18px;top:347px;color:#000;">[<svg class="g" width="84" height="10" viewBox="0 2 84 10"><text class="h">開機回原點畫面</text><use href="#g45" x="0"/><use href="#g46" x="12"/><use href="#g47" x="24"/><use href="#g48" x="36"/><use href="#g49" x="48"/><use href="#g12" x="60"/><use href="#g13" x="72"/></svg>]</div>
<div class="t" style="left:18px;top:397px;color:#0a1a6a;">[<svg class="g" width="36" height="10" viewBox="0 2 36 10"><text class="h">主畫面</text><use href="#g50" x="0"/><use href="#g12" x="12"/><use href="#g13" x="24"/></svg>]</div>
<div class="t" style="left:18px;top:447px;color:#000;">[<svg class="g" width="24" height="10" viewBox="0 2 24 10"><text class="h">手動</text><use href="#g51" x="0"/><use href="#g52" x="12"/></svg>]</div>
<div class="t" style="left:18px;top:497px;color:#000;">[<svg class="g" width="24" height="10" viewBox="0 2 24 10"><text class="h">設定</text><use href="#g8" x="0"/><use href="#g9" x="12"/></svg>]</div>
<div class="t" style="left:18px;top:547px;color:#000;">[IO<svg class="g" width="36" height="10" viewBox="0 2 36 10"><text class="h">總畫面</text><use href="#g53" x="0"/><use href="#g12" x="12"/><use href="#g13" x="24"/></svg>]</div>
<div class="t" style="left:18px;top:597px;color:#000;">[<svg class="g" width="48" height="10" viewBox="0 2 48 10"><text class="h">故障履歷</text><use href="#g54" x="0"/><use href="#g55" x="12"/><use href="#g56" x="24"/><use href="#g57" x="36"/></svg>]</div>
<div class="t" style="left:18px;top:647px;color:#000;">[<svg class="g" width="24" height="10" viewBox="0 2 24 10"><text class="h">通訊</text><use href="#g58" x="0"/><use href="#g59" x="12"/></svg>]</div>
<div class="t" style="left:18px;top:697px;color:#000;">[<svg class="g" width="48" height="10" viewBox="0 2 48 10"><text class="h">連線狀態</text><use href="#g60" x="0"/><use href="#g61" x="12"/><use href="#g62" x="24"/><use href="#g63" x="36"/></svg>]</div>
<div style="left:1px;top:740px;width:224px;height:13px;overflow:hidden">
<div class="t" style="left:18px;top:7px;color:#000">[CIM]</div>
</div>
<div style="left:226px;top:306px;width:18px;height:447px;background:repeating-conic-gradient(#fff 0 25%,#d4d0c8 0 50%) 0 0/2px 2px;"></div>
<div style="left:227px;top:306px;width:17px;height:17px;background:#d4d0c8;border-top:1px solid #fff;border-left:1px solid #fff;border-right:1px solid #404040;border-bottom:1px solid #404040;box-shadow:inset -1px -1px 0 #808080;"></div>
<svg style="left:231px;top:312px;" width="9" height="5" viewBox="0 0 9 5"><path d="M0 5H9L4.5 0Z" fill="#000"/></svg>
<div style="left:227px;top:323px;width:17px;height:9px;background:#d4d0c8;border-top:1px solid #fff;border-left:1px solid #fff;border-right:1px solid #404040;border-bottom:1px solid #404040;box-shadow:inset -1px -1px 0 #808080;"></div>
<div style="left:227px;top:739px;width:17px;height:14px;background:#d4d0c8;border-top:1px solid #fff;border-left:1px solid #fff;border-right:1px solid #404040;border-bottom:1px solid #404040;box-shadow:inset -1px -1px 0 #808080;"></div>
<svg style="left:231px;top:743px;" width="9" height="5" viewBox="0 0 9 5"><path d="M0 0H9L4.5 5Z" fill="#000"/></svg>
<div style="left:1px;top:753px;width:226px;height:17px;background:repeating-conic-gradient(#fff 0 25%,#d4d0c8 0 50%) 0 0/2px 2px;"></div>
<div style="left:1px;top:753px;width:17px;height:16px;background:#d4d0c8;border-top:1px solid #fff;border-left:1px solid #fff;border-right:1px solid #404040;border-bottom:1px solid #404040;box-shadow:inset -1px -1px 0 #808080;"></div>
<svg style="left:7px;top:757px;" width="5" height="9" viewBox="0 0 5 9"><path d="M5 0V9L0 4.5Z" fill="#000"/></svg>
<div style="left:91px;top:753px;width:99px;height:16px;background:#d4d0c8;border-top:1px solid #fff;border-left:1px solid #fff;border-right:1px solid #404040;border-bottom:1px solid #404040;box-shadow:inset -1px -1px 0 #808080;"></div>
<div style="left:212px;top:753px;width:16px;height:16px;background:#d4d0c8;border-top:1px solid #fff;border-left:1px solid #fff;border-right:1px solid #404040;border-bottom:1px solid #404040;box-shadow:inset -1px -1px 0 #808080;"></div>
<svg style="left:218px;top:757px;" width="5" height="9" viewBox="0 0 5 9"><path d="M0 0V9L5 4.5Z" fill="#000"/></svg>
<div style="left:228px;top:753px;width:16px;height:17px;background:#d4d0c8;"></div>
<div style="left:0px;top:772px;width:246px;height:23px;background:#f4f2ea;"></div>
<div style="left:0px;top:772px;width:246px;height:1px;background:#404040;"></div>
<div style="left:201px;top:772px;width:38px;height:22px;background:#d4d0c8;border-bottom:1px solid #404040;border-right:1px solid #404040;border-left:1px solid #fff;"></div>
<div class="t" style="left:29px;top:777px;color:#808080;"><svg class="g" width="12" height="10" viewBox="0 2 12 10"><text class="h">系</text><use href="#g64" x="0"/></svg></div>
<div class="t" style="left:66px;top:777px;color:#808080;"><svg class="g" width="12" height="10" viewBox="0 2 12 10"><text class="h">位</text><use href="#g65" x="0"/></svg></div>
<div class="t" style="left:106px;top:777px;color:#808080;"><svg class="g" width="12" height="10" viewBox="0 2 12 10"><text class="h">顏</text><use href="#g66" x="0"/></svg></div>
<div class="t" style="left:146px;top:777px;color:#808080;"><svg class="g" width="12" height="10" viewBox="0 2 12 10"><text class="h">搜</text><use href="#g36" x="0"/></svg></div>
<div class="t" style="left:184px;top:777px;color:#808080;"><svg class="g" width="12" height="10" viewBox="0 2 12 10"><text class="h">共</text><use href="#g6" x="0"/></svg></div>
<div class="t" style="left:223px;top:777px;color:#000;"><svg class="g" width="12" height="10" viewBox="0 2 12 10"><text class="h">畫</text><use href="#g12" x="0"/></svg></div>
<svg style="left:6px;top:775px;" width="16" height="16" viewBox="0 0 16 16"><rect x="2" y="3" width="9" height="9" fill="#506070"/><rect x="4" y="5" width="10" height="9" fill="#304050"/><rect x="5" y="6" width="6" height="5" fill="#a0c0d0"/></svg>
<svg style="left:45px;top:775px;" width="16" height="16" viewBox="0 0 16 16"><rect x="1" y="1" width="14" height="14" fill="#30b030"/><path d="M1 4H15M1 7H15M1 10H15M1 13H15M4 1V15M7 1V15M10 1V15M13 1V15" stroke="#e0f0e0" stroke-width=".8"/></svg>
<svg style="left:85px;top:775px;" width="16" height="16" viewBox="0 0 16 16"><rect x="1" y="1" width="5" height="5" fill="#e03030"/><rect x="6" y="1" width="5" height="5" fill="#f0c020"/><rect x="11" y="1" width="4" height="5" fill="#3050c0"/><rect x="1" y="6" width="5" height="5" fill="#a040c0"/><rect x="11" y="6" width="4" height="5" fill="#30a040"/><rect x="1" y="11" width="5" height="4" fill="#30a0e0"/><rect x="6" y="11" width="5" height="4" fill="#e07030"/><rect x="11" y="11" width="4" height="4" fill="#803080"/></svg>
<svg style="left:125px;top:775px;" width="16" height="16" viewBox="0 0 16 16"><circle cx="6" cy="6" r="4.5" fill="#c8e8f8" stroke="#333" stroke-width="1.5"/><path d="M9 9L15 15" stroke="#b07020" stroke-width="2.5"/></svg>
<svg style="left:165px;top:775px;" width="16" height="16" viewBox="0 0 16 16"><rect x="2" y="1" width="12" height="14" rx="2" fill="#d02020"/><circle cx="9" cy="7" r="3" fill="#fff"/></svg>
<svg style="left:204px;top:775px;" width="16" height="16" viewBox="0 0 16 16"><rect x="1" y="1" width="14" height="14" fill="#fff" stroke="#3040a0" stroke-width="1.5"/><rect x="3" y="3" width="4" height="4" fill="#fff" stroke="#3040a0"/><rect x="9" y="3" width="4" height="4" fill="#fff" stroke="#3040a0"/><rect x="3" y="9" width="4" height="4" fill="#fff" stroke="#3040a0"/><rect x="9" y="9" width="4" height="4" fill="#fff" stroke="#3040a0"/></svg>
<div style="left:43px;top:776px;width:1px;height:16px;background:#a0a0a0;"></div>
<div style="left:83px;top:776px;width:1px;height:16px;background:#a0a0a0;"></div>
<div style="left:122px;top:776px;width:1px;height:16px;background:#a0a0a0;"></div>
<div style="left:161px;top:776px;width:1px;height:16px;background:#a0a0a0;"></div>
<div style="left:250px;top:148px;width:970px;height:648px;border:1px solid;border-color:#808080 #fff #fff #808080;background:#d4d0c8;"></div>
<div style="left:251px;top:149px;width:968px;height:21px;background:#f3f1e8;"></div>
<div style="left:251px;top:170px;width:968px;height:1px;background:#fff;"></div>
<div style="left:251px;top:149px;width:189px;height:22px;background:#d4d0c8;border-top:1px solid #fff;border-left:1px solid #fff;border-right:1px solid #404040;"></div>
<div style="left:251px;top:173px;width:968px;height:1px;background:#808080;"></div>
<svg style="left:258px;top:153px;" width="18" height="16" viewBox="0 0 18 16"><rect x="1.5" y="1.5" width="14" height="11" fill="#707070" stroke="#000" stroke-width="1.6"/><rect x="3" y="3" width="11" height="8" fill="#888"/><rect x="6" y="6" width="5" height="2" fill="#ccc"/><path d="M2 15H16" stroke="#000" stroke-width="1.5" stroke-dasharray="2 1"/><path d="M15.5 2V12" stroke="#f0f080"/></svg>
<div class="t" style="left:282px;top:155px;font-weight:bold;"><svg class="g" width="24" height="10" viewBox="0 2 24 10"><text class="h">基本</text><use href="#g67" x="0"/><use href="#g68" x="12"/></svg> 1(<svg class="g" width="84" height="10" viewBox="0 2 84 10"><text class="h">開機回原點畫面</text><use href="#g69" x="0"/><use href="#g70" x="12"/><use href="#g71" x="24"/><use href="#g72" x="36"/><use href="#g73" x="48"/><use href="#g74" x="60"/><use href="#g75" x="72"/></svg>)</div>
<div style="left:423px;top:155px;width:11px;height:11px;background:#8a8a8a;border:1px solid #fff;"></div>
<svg style="left:425px;top:157px;" width="7" height="7" viewBox="0 0 7 7"><path d="M0.5 0.5L6.5 6.5M6.5 0.5L0.5 6.5" stroke="#fff" stroke-width="1.8"/></svg>
<svg style="left:1194px;top:156px;" width="20" height="9" viewBox="0 0 20 9"><path d="M6 0.5L1 4.5L6 8.5Z" fill="none" stroke="#a0a0a0"/><path d="M14 0.5L19 4.5L14 8.5Z" fill="none" stroke="#a0a0a0"/></svg>
<div style="left:272px;top:174px;width:946px;height:18px;background:#d4d0c8;"></div>
<div style="left:312px;top:175px;width:640px;height:16px;background:#fff;"></div>
<div style="left:252px;top:193px;width:20px;height:602px;background:#d4d0c8;border-right:1px solid #fff;"></div>
<div style="left:256px;top:232px;width:12px;height:481px;background:#fff;"></div>
<div style="left:252px;top:174px;width:20px;height:19px;background:#d4d0c8;border-right:1px solid #fff;border-bottom:1px solid #fff;"></div>
<div style="left:272px;top:192px;width:946px;height:1px;background:#fff;"></div>
<div class="t" style="left:308px;top:178px;width:8px;text-align:center;font-size:11px;line-height:12px;">0</div>
<div class="t" style="left:408px;top:178px;width:8px;text-align:center;font-size:11px;line-height:12px;">1</div>
<div class="t" style="left:508px;top:178px;width:8px;text-align:center;font-size:11px;line-height:12px;">2</div>
<div class="t" style="left:608px;top:178px;width:8px;text-align:center;font-size:11px;line-height:12px;">3</div>
<div class="t" style="left:708px;top:178px;width:8px;text-align:center;font-size:11px;line-height:12px;">4</div>
<div class="t" style="left:808px;top:178px;width:8px;text-align:center;font-size:11px;line-height:12px;">5</div>
<div class="t" style="left:908px;top:178px;width:8px;text-align:center;font-size:11px;line-height:12px;">6</div>
<div class="t" style="left:1008px;top:178px;width:8px;text-align:center;font-size:11px;line-height:12px;">7</div>
<div class="t" style="left:1108px;top:178px;width:8px;text-align:center;font-size:11px;line-height:12px;">8</div>
<div class="t" style="left:1208px;top:178px;width:8px;text-align:center;font-size:11px;line-height:12px;">9</div>
<div class="t" style="left:257px;top:227px;width:10px;text-align:center;font-size:11px;line-height:12px;">0</div>
<div class="t" style="left:257px;top:327px;width:10px;text-align:center;font-size:11px;line-height:12px;">1</div>
<div class="t" style="left:257px;top:427px;width:10px;text-align:center;font-size:11px;line-height:12px;">2</div>
<div class="t" style="left:257px;top:527px;width:10px;text-align:center;font-size:11px;line-height:12px;">3</div>
<div class="t" style="left:257px;top:627px;width:10px;text-align:center;font-size:11px;line-height:12px;">4</div>
<div class="t" style="left:257px;top:727px;width:10px;text-align:center;font-size:11px;line-height:12px;">5</div>
<svg style="left:0px;top:0px;left:0;top:0;pointer-events:none;" width="1440" height="874" viewBox="0 0 1440 874"><path d="M282.5 183v3M292.5 183v3M302.5 183v3M322.5 183v3M332.5 183v3M342.5 183v3M352.5 183v3M362.5 183v3M372.5 183v3M382.5 183v3M392.5 183v3M402.5 183v3M422.5 183v3M432.5 183v3M442.5 183v3M452.5 183v3M462.5 183v3M472.5 183v3M482.5 183v3M492.5 183v3M502.5 183v3M522.5 183v3M532.5 183v3M542.5 183v3M552.5 183v3M562.5 183v3M572.5 183v3M582.5 183v3M592.5 183v3M602.5 183v3M622.5 183v3M632.5 183v3M642.5 183v3M652.5 183v3M662.5 183v3M672.5 183v3M682.5 183v3M692.5 183v3M702.5 183v3M722.5 183v3M732.5 183v3M742.5 183v3M752.5 183v3M762.5 183v3M772.5 183v3M782.5 183v3M792.5 183v3M802.5 183v3M822.5 183v3M832.5 183v3M842.5 183v3M852.5 183v3M862.5 183v3M872.5 183v3M882.5 183v3M892.5 183v3M902.5 183v3M922.5 183v3M932.5 183v3M942.5 183v3M952.5 183v3M962.5 183v3M972.5 183v3M982.5 183v3M992.5 183v3M1002.5 183v3M1022.5 183v3M1032.5 183v3M1042.5 183v3M1052.5 183v3M1062.5 183v3M1072.5 183v3M1082.5 183v3M1092.5 183v3M1102.5 183v3M1122.5 183v3M1132.5 183v3M1142.5 183v3M1152.5 183v3M1162.5 183v3M1172.5 183v3M1182.5 183v3M1192.5 183v3M1202.5 183v3M261 203.5h3M261 213.5h3M261 223.5h3M261 243.5h3M261 253.5h3M261 263.5h3M261 273.5h3M261 283.5h3M261 293.5h3M261 303.5h3M261 313.5h3M261 323.5h3M261 343.5h3M261 353.5h3M261 363.5h3M261 373.5h3M261 383.5h3M261 393.5h3M261 403.5h3M261 413.5h3M261 423.5h3M261 443.5h3M261 453.5h3M261 463.5h3M261 473.5h3M261 483.5h3M261 493.5h3M261 503.5h3M261 513.5h3M261 523.5h3M261 543.5h3M261 553.5h3M261 563.5h3M261 573.5h3M261 583.5h3M261 593.5h3M261 603.5h3M261 613.5h3M261 623.5h3M261 643.5h3M261 653.5h3M261 663.5h3M261 673.5h3M261 683.5h3M261 693.5h3M261 703.5h3M261 713.5h3M261 723.5h3M261 743.5h3M261 753.5h3M261 763.5h3M261 773.5h3M261 783.5h3" stroke="#000" stroke-width="1"/></svg>
<div style="left:272px;top:193px;width:946px;height:602px;background:#808080;"></div>
<div style="left:280px;top:201px;width:704px;height:544px;background:#6b6b6b;border-style:solid;border-width:2px 1px 1px 2px;border-color:#fff #404040 #404040 #fff;box-shadow:inset -1px -1px 0 #7c7c7c;"></div>
<div style="left:340px;top:210px;width:12px;height:5px;background:#d8d8d8;border:1px solid #000;"></div>
<div style="left:905px;top:210px;width:12px;height:5px;background:#d8d8d8;border:1px solid #000;"></div>
<div style="left:346px;top:729px;width:12px;height:5px;background:#d8d8d8;border:1px solid #000;"></div>
<div style="left:906px;top:729px;width:12px;height:5px;background:#d8d8d8;border:1px solid #000;"></div>
<div style="left:312px;top:232px;width:642px;height:482px;background:#0080a0;border:2px solid #e8ffff;"></div>
<div style="left:314px;top:271px;width:638px;height:2px;background:#e8ffff;"></div>
<div style="left:540px;top:234px;width:2px;height:37px;background:#e8ffff;"></div>
<div style="left:542px;top:233px;width:195px;height:40px;background:#000;"></div>
<div style="left:567px;top:272px;width:6px;height:4px;background:#000;border-radius:0 0 3px 3px;"></div>
<div style="left:737px;top:233px;width:100px;height:37px;background:#000;border-top:2px solid #b0b0b0;"></div>
<div style="left:739px;top:237px;width:94px;height:30px;background:#4e4914;border:1px solid #8a8440;border-right-color:#222;border-bottom-color:#222;"></div>
<div class="t" style="left:753px;top:245px;color:#fffbe0;font-size:16px;line-height:16px;"><svg class="g" width="64" height="10" viewBox="0 6 64 10"><text class="h">警報停止</text><use href="#g76" x="0"/><use href="#g77" x="16"/><use href="#g78" x="32"/><use href="#g79" x="48"/></svg></div>
<div style="left:836px;top:233px;width:4px;height:38px;background:#101010;"></div>
<div style="left:840px;top:234px;width:112px;height:19px;background:#0000f0;"></div>
<div style="left:840px;top:253px;width:112px;height:2px;background:#e8ffff;"></div>
<div style="left:840px;top:255px;width:112px;height:16px;background:#0000f0;"></div>
<div class="t" style="left:841px;top:236px;color:#fff;font-family:'Liberation Mono',monospace;font-size:15px;line-height:16px;letter-spacing:-1px;transform:scaleY(1.25);transform-origin:0 0;">yy/mm/dd (Mon)</div>
<div class="t" style="left:868px;top:256px;color:#fff;font-family:'Liberation Mono',monospace;font-size:15px;line-height:16px;letter-spacing:-1px;transform:scaleY(1.22);transform-origin:0 0;">hh:mm:ss</div>
<div style="left:316px;top:277px;width:240px;height:412px;background:#fff;border-radius:12px 12px 14px 14px;"></div>
<div style="left:316px;top:308px;width:240px;height:2px;background:#000;"></div>
<div style="left:396px;top:308px;width:2px;height:381px;background:#000;"></div>
<div style="left:475px;top:308px;width:2px;height:381px;background:#000;"></div>
<div class="t" style="left:402px;top:291px;color:#1a1a80;font-size:16px;line-height:16px;"><svg class="g" width="64" height="10" viewBox="0 6 64 10"><text class="h">異常排除</text><use href="#g80" x="0"/><use href="#g81" x="16"/><use href="#g82" x="32"/><use href="#g83" x="48"/></svg></div>
<div class="t" style="left:321px;top:315px;width:80px;text-align:center;font-family:'Liberation Mono',monospace;font-weight:bold;font-size:12px;letter-spacing:1px;text-shadow:0.5px 0 0 #000;">Load</div>
<div class="t" style="left:398px;top:315px;width:80px;text-align:center;font-family:'Liberation Mono',monospace;font-weight:bold;font-size:12px;letter-spacing:1px;text-shadow:0.5px 0 0 #000;">Manual-1</div>
<div class="t" style="left:477px;top:315px;width:80px;text-align:center;font-family:'Liberation Mono',monospace;font-weight:bold;font-size:12px;letter-spacing:1px;text-shadow:0.5px 0 0 #000;">Manual-2</div>
<div style="left:319px;top:333px;width:74px;height:38px;background:#000;border-top:2px solid #909090;border-left:2px solid #909090;"></div>
<div style="left:322px;top:336px;width:67px;height:31px;background:#9a3f08;border-top:1px solid #e08a48;border-left:1px solid #e08a48;"></div>
<div class="t" style="left:319px;top:344px;width:72px;text-align:center;color:#ffea88;font-family:'Liberation Serif',serif;font-size:13px;line-height:13px;letter-spacing:-0.5px;">Box Stroke</div>
<div style="left:319px;top:377px;width:74px;height:38px;background:#000;border-top:2px solid #909090;border-left:2px solid #909090;"></div>
<div style="left:322px;top:380px;width:67px;height:31px;background:#9a3f08;border-top:1px solid #e08a48;border-left:1px solid #e08a48;"></div>
<div class="t" style="left:319px;top:388px;width:72px;text-align:center;color:#ffea88;font-family:'Liberation Serif',serif;font-size:13px;line-height:13px;letter-spacing:-0.5px;">Rotate Trans</div>
<div style="left:319px;top:420px;width:74px;height:38px;background:#000;border-top:2px solid #909090;border-left:2px solid #909090;"></div>
<div style="left:322px;top:423px;width:67px;height:31px;background:#9a3f08;border-top:1px solid #e08a48;border-left:1px solid #e08a48;"></div>
<div class="t" style="left:319px;top:431px;width:72px;text-align:center;color:#ffea88;font-family:'Liberation Serif',serif;font-size:13px;line-height:13px;letter-spacing:-0.5px;">Conveyor</div>
<div style="left:319px;top:463px;width:74px;height:38px;background:#000;border-top:2px solid #909090;border-left:2px solid #909090;"></div>
<div style="left:322px;top:466px;width:67px;height:31px;background:#9a3f08;border-top:1px solid #e08a48;border-left:1px solid #e08a48;"></div>
<div class="t" style="left:319px;top:468px;width:72px;text-align:center;color:#ffea88;font-family:'Liberation Serif',serif;font-size:13px;line-height:13px;letter-spacing:-0.5px;">IV L/UL<br>Conveyor</div>
<div style="left:319px;top:507px;width:74px;height:38px;background:#000;border-top:2px solid #909090;border-left:2px solid #909090;"></div>
<div style="left:322px;top:510px;width:67px;height:31px;background:#9a3f08;border-top:1px solid #e08a48;border-left:1px solid #e08a48;"></div>
<div class="t" style="left:319px;top:512px;width:72px;text-align:center;color:#ffea88;font-family:'Liberation Serif',serif;font-size:13px;line-height:13px;letter-spacing:-0.5px;">EL<br>Conveyor</div>
<div style="left:400px;top:333px;width:73px;height:37px;background:#000;border-top:2px solid #909090;border-left:2px solid #909090;"></div>
<div style="left:403px;top:336px;width:66px;height:30px;background:#9a3f08;border-top:1px solid #e08a48;border-left:1px solid #e08a48;"></div>
<div class="t" style="left:400px;top:344px;width:71px;text-align:center;color:#ffea88;font-family:'Liberation Serif',serif;font-size:13px;line-height:13px;letter-spacing:-0.5px;">Conveyor</div>
<div style="left:479px;top:333px;width:74px;height:37px;background:#000;border-top:2px solid #909090;border-left:2px solid #909090;"></div>
<div style="left:482px;top:336px;width:67px;height:30px;background:#9a3f08;border-top:1px solid #e08a48;border-left:1px solid #e08a48;"></div>
<div class="t" style="left:479px;top:344px;width:72px;text-align:center;color:#ffea88;font-family:'Liberation Serif',serif;font-size:13px;line-height:13px;letter-spacing:-0.5px;">Conveyor</div>
<div style="left:400px;top:377px;width:73px;height:37px;background:#000;border-top:2px solid #909090;border-left:2px solid #909090;"></div>
<div style="left:403px;top:380px;width:66px;height:30px;background:#9a3f08;border-top:1px solid #e08a48;border-left:1px solid #e08a48;"></div>
<div class="t" style="left:400px;top:388px;width:71px;text-align:center;color:#ffea88;font-family:'Liberation Serif',serif;font-size:13px;line-height:13px;letter-spacing:-0.5px;">Sort ARM</div>
<div style="left:479px;top:377px;width:74px;height:37px;background:#000;border-top:2px solid #909090;border-left:2px solid #909090;"></div>
<div style="left:482px;top:380px;width:67px;height:30px;background:#9a3f08;border-top:1px solid #e08a48;border-left:1px solid #e08a48;"></div>
<div class="t" style="left:479px;top:388px;width:72px;text-align:center;color:#ffea88;font-family:'Liberation Serif',serif;font-size:13px;line-height:13px;letter-spacing:-0.5px;">Sort ARM</div>
<div style="left:556px;top:273px;width:2px;height:422px;background:#e8ffff;"></div>
<div style="left:558px;top:376px;width:394px;height:2px;background:#e8ffff;"></div>
<div style="left:558px;top:445px;width:394px;height:2px;background:#e8ffff;"></div>
<div style="left:558px;top:571px;width:394px;height:2px;background:#e8ffff;"></div>
<div style="left:314px;top:693px;width:638px;height:2px;background:#e8ffff;"></div>
<div style="left:573px;top:280px;width:171px;height:85px;background:#ff00ff;border-radius:14px;"></div>
<div style="left:573px;top:306px;width:171px;height:2px;background:#2a1a5a;"></div>
<div class="t" style="left:615px;top:288px;color:#1a1a7a;"><svg class="g" width="91" height="10" viewBox="0 2 91 10"><text class="h">開機歸原點解除</text><use href="#g45" x="0"/><use href="#g46" x="13"/><use href="#g84" x="26"/><use href="#g48" x="39"/><use href="#g49" x="52"/><use href="#g85" x="65"/><use href="#g86" x="78"/></svg></div>
<div style="left:769px;top:281px;width:171px;height:84px;background:#ffff00;border-radius:14px;"></div>
<div style="left:769px;top:307px;width:171px;height:2px;background:#2a1a5a;"></div>
<div class="t" style="left:819px;top:289px;color:#1a1a7a;"><svg class="g" width="91" height="10" viewBox="0 2 91 10"><text class="h">開機歸原點開始</text><use href="#g45" x="0"/><use href="#g46" x="13"/><use href="#g84" x="26"/><use href="#g48" x="39"/><use href="#g49" x="52"/><use href="#g45" x="65"/><use href="#g87" x="78"/></svg></div>
<div style="left:581px;top:317px;width:31px;height:30px;background:#a8a8a8;border:2px solid;border-color:#f0f0f0 #000 #000 #f0f0f0;box-shadow:0 0 0 1px #202020;"></div>
<div style="left:775px;top:317px;width:31px;height:30px;background:#a8a8a8;border:2px solid;border-color:#f0f0f0 #000 #000 #f0f0f0;box-shadow:0 0 0 1px #202020;"></div>
<div style="left:623px;top:315px;width:112px;height:40px;background:#000;"></div>
<div style="left:623px;top:315px;width:9px;height:40px;background:#a0a0a0;border-right:2px solid #404040;"></div>
<div style="left:634px;top:319px;width:97px;height:32px;background:#5a0c0c;border:1px solid #8a2020;"></div>
<div class="t" style="left:634px;top:326px;width:97px;text-align:center;color:#fff;font-size:16px;line-height:18px;">RESET</div>
<div style="left:816px;top:315px;width:112px;height:40px;background:#000;"></div>
<div style="left:816px;top:315px;width:9px;height:40px;background:#a0a0a0;border-right:2px solid #404040;"></div>
<div style="left:827px;top:319px;width:97px;height:32px;background:#4a4412;border:1px solid #a09a50;"></div>
<div class="t" style="left:827px;top:326px;width:97px;text-align:center;color:#fff;font-size:16px;line-height:18px;">START</div>
<div style="left:573px;top:396px;width:27px;height:26px;background:#111;border:1px solid #a8d8e8;"></div>
<div style="left:575px;top:398px;width:23px;height:22px;background:#a8a8a8;border:1px dashed;border-color:#fff #333 #333 #fff;"></div>
<div class="t" style="left:615px;top:395px;color:#f0ffff;font-family:'Liberation Serif',serif;font-size:20px;line-height:20px;letter-spacing:-0.2px;text-shadow:0.6px 0 0 #f0ffff;">Load</div>
<div style="left:726px;top:393px;width:13px;height:15px;background:#a4a4a4;border:1px solid;border-color:#e0e0e0 #000 #000 #e0e0e0;box-shadow:1px 1px 0 #000;"></div>
<div class="t" style="left:743px;top:393px;color:#fff;font-family:'Liberation Serif',serif;font-size:13px;line-height:15px;letter-spacing:-0.72px;">M3004:Rotate initial complete</div>
<div style="left:726px;top:413px;width:13px;height:15px;background:#a4a4a4;border:1px solid;border-color:#e0e0e0 #000 #000 #e0e0e0;box-shadow:1px 1px 0 #000;"></div>
<div class="t" style="left:743px;top:413px;color:#fff;font-family:'Liberation Serif',serif;font-size:13px;line-height:15px;letter-spacing:-0.72px;">M3006:Load Z-trans initial complete</div>
<div style="left:573px;top:502px;width:27px;height:26px;background:#111;border:1px solid #a8d8e8;"></div>
<div style="left:575px;top:504px;width:23px;height:22px;background:#a8a8a8;border:1px dashed;border-color:#fff #333 #333 #fff;"></div>
<div class="t" style="left:615px;top:501px;color:#f0ffff;font-family:'Liberation Serif',serif;font-size:20px;line-height:20px;letter-spacing:-0.2px;text-shadow:0.6px 0 0 #f0ffff;">Manual-1</div>
<div style="left:726px;top:474px;width:13px;height:15px;background:#a4a4a4;border:1px solid;border-color:#e0e0e0 #000 #000 #e0e0e0;box-shadow:1px 1px 0 #000;"></div>
<div class="t" style="left:743px;top:474px;color:#fff;font-family:'Liberation Serif',serif;font-size:13px;line-height:15px;letter-spacing:-0.72px;">M3004:Arm-1 initial complete</div>
<div style="left:726px;top:493px;width:13px;height:15px;background:#a4a4a4;border:1px solid;border-color:#e0e0e0 #000 #000 #e0e0e0;box-shadow:1px 1px 0 #000;"></div>
<div class="t" style="left:743px;top:493px;color:#fff;font-family:'Liberation Serif',serif;font-size:13px;line-height:15px;letter-spacing:-0.72px;">M3006:Arm-2 initial complete</div>
<div style="left:726px;top:513px;width:13px;height:15px;background:#a4a4a4;border:1px solid;border-color:#e0e0e0 #000 #000 #e0e0e0;box-shadow:1px 1px 0 #000;"></div>
<div class="t" style="left:743px;top:513px;color:#fff;font-family:'Liberation Serif',serif;font-size:13px;line-height:15px;letter-spacing:-0.72px;">M3008:Arm-3 initial complete</div>
<div style="left:726px;top:532px;width:13px;height:15px;background:#a4a4a4;border:1px solid;border-color:#e0e0e0 #000 #000 #e0e0e0;box-shadow:1px 1px 0 #000;"></div>
<div class="t" style="left:743px;top:532px;color:#fff;font-family:'Liberation Serif',serif;font-size:13px;line-height:15px;letter-spacing:-0.72px;">M3010:Arm-4 initial complete</div>
<div style="left:573px;top:627px;width:27px;height:26px;background:#111;border:1px solid #a8d8e8;"></div>
<div style="left:575px;top:629px;width:23px;height:22px;background:#a8a8a8;border:1px dashed;border-color:#fff #333 #333 #fff;"></div>
<div class="t" style="left:615px;top:626px;color:#f0ffff;font-family:'Liberation Serif',serif;font-size:20px;line-height:20px;letter-spacing:-0.2px;text-shadow:0.6px 0 0 #f0ffff;">Manual-2</div>
<div style="left:726px;top:600px;width:13px;height:15px;background:#a4a4a4;border:1px solid;border-color:#e0e0e0 #000 #000 #e0e0e0;box-shadow:1px 1px 0 #000;"></div>
<div class="t" style="left:743px;top:600px;color:#fff;font-family:'Liberation Serif',serif;font-size:13px;line-height:15px;letter-spacing:-0.72px;">M3004:Arm-1 initial complete</div>
<div style="left:726px;top:619px;width:13px;height:15px;background:#a4a4a4;border:1px solid;border-color:#e0e0e0 #000 #000 #e0e0e0;box-shadow:1px 1px 0 #000;"></div>
<div class="t" style="left:743px;top:619px;color:#fff;font-family:'Liberation Serif',serif;font-size:13px;line-height:15px;letter-spacing:-0.72px;">M3006:Arm-2 initial complete</div>
<div style="left:726px;top:639px;width:13px;height:15px;background:#a4a4a4;border:1px solid;border-color:#e0e0e0 #000 #000 #e0e0e0;box-shadow:1px 1px 0 #000;"></div>
<div class="t" style="left:743px;top:639px;color:#fff;font-family:'Liberation Serif',serif;font-size:13px;line-height:15px;letter-spacing:-0.72px;">M3008:Arm-3 initial complete</div>
<div style="left:726px;top:658px;width:13px;height:15px;background:#a4a4a4;border:1px solid;border-color:#e0e0e0 #000 #000 #e0e0e0;box-shadow:1px 1px 0 #000;"></div>
<div class="t" style="left:743px;top:658px;color:#fff;font-family:'Liberation Serif',serif;font-size:13px;line-height:15px;letter-spacing:-0.72px;">M3010:Arm-4 initial complete</div>
<div class="t" style="left:317px;top:698px;color:#0a3050;font-size:16px;line-height:16px;"><svg class="g" width="64" height="10" viewBox="0 6 64 10"><text class="h">目前畫面</text><use href="#g88" x="0"/><use href="#g89" x="16"/><use href="#g90" x="32"/><use href="#g91" x="48"/></svg><span style="margin:0 2px 0 1px">:</span><svg class="g" width="112" height="10" viewBox="0 6 112 10"><text class="h">開機回原點畫面</text><use href="#g92" x="0"/><use href="#g93" x="16"/><use href="#g94" x="32"/><use href="#g95" x="48"/><use href="#g96" x="64"/><use href="#g90" x="80"/><use href="#g91" x="96"/></svg></div>
<svg style="left:312px;top:652px;" width="353" height="53" viewBox="0 0 353 53"><path d="M1.5 1.5H244" stroke="#000" stroke-width="1" stroke-dasharray="4 11"/><path d="M244 1.5H351.5V51.5H1.5V1.5" fill="none" stroke="#1a2a9a" stroke-width="1" stroke-dasharray="4 4"/><path d="M351.5 51.5H1.5" fill="none" stroke="#e8ffff" stroke-width="1" stroke-dasharray="4 4" stroke-dashoffset="4"/></svg>
<svg style="left:918px;top:696px;" width="35" height="18" viewBox="0 0 35 18"><rect x="0.5" y="0.5" width="33" height="16" fill="none" stroke="#e8ffff"/><rect x="0.5" y="0.5" width="33" height="16" fill="none" stroke="#000" stroke-dasharray="2 4"/><path d="M8.5 2.5V8.5M8.5 8.5V14.5M11.0 2.5H16.0M16.0 2.5V8.5M11.0 8.5H16.0M11.0 8.5V14.5M11.0 14.5H16.0M18.5 2.5H23.5M23.5 2.5V8.5M18.5 8.5H23.5M23.5 8.5V14.5M18.5 14.5H23.5M26.0 2.5V8.5M26.0 8.5H31.0M31.0 2.5V8.5M31.0 8.5V14.5" stroke="#c0ff80" stroke-width="1" fill="none"/></svg>
<div style="left:1224px;top:151px;width:216px;height:18px;border:1px solid #8c8a84;background:#d4d0c8;"></div>
<div class="t" style="left:1229px;top:154px;"><svg class="g" width="24" height="10" viewBox="0 2 24 10"><text class="h">包裝</text><use href="#g97" x="0"/><use href="#g98" x="12"/></svg></div>
<svg style="left:1410px;top:153px;" width="10" height="12" viewBox="0 0 10 12"><path d="M2 1H8M3 1V7M7 1V7M1 7H9M5 7V11" stroke="#000" stroke-width="1.3" fill="none"/></svg>
<svg style="left:1425px;top:154px;" width="10" height="10" viewBox="0 0 10 10"><path d="M1 1L9 9M9 1L1 9" stroke="#000" stroke-width="2.2"/></svg>
<div style="left:1224px;top:174px;width:216px;height:28px;background:#fffdf6;"></div>
<div style="left:1224px;top:205px;width:216px;height:536px;background:#fffdf6;"></div>
<div style="left:1224px;top:741px;width:216px;height:30px;background:#fffdf6;"></div>
<div style="left:1224px;top:739px;width:216px;height:3px;background:#d0ccc4;"></div>
<div style="left:1233px;top:178px;width:196px;height:20px;background:#fff;border-top:1px solid #808080;border-left:1px solid #808080;border-right:1px solid #fff;border-bottom:1px solid #fff;box-shadow:inset 1px 1px 0 #404040;"></div>
<div class="t" style="left:1237px;top:182px;font-size:12px;">Favorite</div>
<div style="left:1412px;top:180px;width:15px;height:16px;background:#d4d0c8;border-top:1px solid #fff;border-left:1px solid #fff;border-right:1px solid #404040;border-bottom:1px solid #404040;box-shadow:inset -1px -1px 0 #808080;"></div>
<svg style="left:1416px;top:187px;" width="8" height="4" viewBox="0 0 8 4"><path d="M0 0H7L3.5 4Z" fill="#000"/></svg>
<div style="left:1233px;top:213px;width:199px;height:518px;background:#fff;border:1px solid #000;border-right-color:#404040;"></div>
<div style="left:1233px;top:745px;width:68px;height:21px;background:#d4d0c8;border-top:1px solid #fff;border-left:1px solid #fff;border-right:1px solid #404040;border-bottom:1px solid #404040;box-shadow:inset -1px -1px 0 #808080;"></div>
<div class="t" style="left:1255px;top:749px;color:#a0a0a0;"><svg class="g" width="24" height="10" viewBox="0 2 24 10"><text class="h">改變</text><use href="#g99" x="0"/><use href="#g100" x="12"/></svg></div>
<div style="left:1302px;top:745px;width:66px;height:21px;background:#d4d0c8;border-top:1px solid #fff;border-left:1px solid #fff;border-right:1px solid #404040;border-bottom:1px solid #404040;box-shadow:inset -1px -1px 0 #808080;"></div>
<div class="t" style="left:1323px;top:749px;color:#a0a0a0;"><svg class="g" width="24" height="10" viewBox="0 2 24 10"><text class="h">刪除</text><use href="#g101" x="0"/><use href="#g86" x="12"/></svg></div>
<div style="left:1407px;top:745px;width:40px;height:21px;background:#d4d0c8;border-top:1px solid #fff;border-left:1px solid #fff;border-right:1px solid #404040;border-bottom:1px solid #404040;box-shadow:inset -1px -1px 0 #808080;"></div>
<div style="left:1224px;top:772px;width:216px;height:23px;background:#f4f2ea;"></div>
<div style="left:1224px;top:772px;width:216px;height:1px;background:#404040;"></div>
<div style="left:1376px;top:772px;width:51px;height:22px;background:#d4d0c8;border-bottom:1px solid #404040;border-right:1px solid #404040;border-left:1px solid #fff;"></div>
<svg style="left:1232px;top:775px;" width="16" height="16" viewBox="0 0 16 16"><circle cx="8" cy="8" r="7" fill="#2a8ad8" stroke="#1a5aa0"/><circle cx="8" cy="8" r="5" fill="#60b8f0"/><text x="5" y="11.5" font-size="8" font-family="Liberation Sans" font-weight="bold" fill="#fff">P</text></svg>
<div class="t" style="left:1252px;top:777px;color:#606060;"><svg class="g" width="24" height="10" viewBox="0 2 24 10"><text class="h">屬性</text><use href="#g102" x="0"/><use href="#g103" x="12"/></svg></div>
<div style="left:1281px;top:776px;width:1px;height:16px;background:#808080;"></div>
<svg style="left:1286px;top:775px;" width="16" height="16" viewBox="0 0 16 16"><path d="M2 3H14V12A6 4 0 0 1 2 12Z" fill="#b8c8d8" stroke="#506070"/><circle cx="6" cy="8" r="2" fill="#3050a0"/><circle cx="10" cy="10" r="2" fill="#607080"/></svg>
<div class="t" style="left:1306px;top:777px;color:#606060;">Parts <svg class="g" width="36" height="10" viewBox="0 2 36 10"><text class="h">工具箱</text><use href="#g104" x="0"/><use href="#g105" x="12"/><use href="#g106" x="24"/></svg></div>
<svg style="left:1380px;top:775px;" width="16" height="16" viewBox="0 0 16 16"><path d="M2 2L14 2L13 12L8 15L3 12Z" fill="#e8e8e8" stroke="#444"/><circle cx="6" cy="7" r="2" fill="#d03030"/><circle cx="10" cy="6" r="2" fill="#3050c0"/><circle cx="8" cy="10" r="2" fill="#30a040"/></svg>
<div class="t" style="left:1400px;top:777px;"><svg class="g" width="24" height="10" viewBox="0 2 24 10"><text class="h">包裝</text><use href="#g97" x="0"/><use href="#g98" x="12"/></svg></div>
<div style="left:0px;top:796px;width:1440px;height:25px;background:#f3f1e8;border-top:1px solid #d4d0c8;"></div>
<div style="left:2px;top:799px;width:80px;height:23px;background:#d4d0c8;border-top:1px solid #808080;border-left:1px solid #808080;border-right:1px solid #808080;"></div>
<svg style="left:5px;top:801px;" width="18" height="18" viewBox="0 0 18 18"><rect x="2" y="2" width="13" height="10" fill="#fff" stroke="#000" stroke-width="1.6"/><path d="M4 5H13M4 8H13" stroke="#777" stroke-width=".8"/><path d="M1 12L4 16L12 6" stroke="#a01010" stroke-width="2" fill="none"/></svg>
<div class="t" style="left:29px;top:804px;color:#303030;"><svg class="g" width="48" height="10" viewBox="0 2 48 10"><text class="h">檢查錯誤</text><use href="#g4" x="0"/><use href="#g107" x="12"/><use href="#g108" x="24"/><use href="#g109" x="36"/></svg></div>
<div style="left:0px;top:821px;width:1440px;height:26px;background:#d4d0c8;border-bottom:1px solid #808080;"></div>
<div style="left:5px;top:826px;width:20px;height:16px;border:1px solid #808080;background:#f8f8f6;"></div>
<div class="t" style="left:7px;top:827px;color:#505050;font-size:13px;letter-spacing:-0.5px;">F1</div>
<div class="t" style="left:28px;top:828px;color:#000;"><svg class="g" width="48" height="10" viewBox="0 2 48 10"><text class="h">使用手冊</text><use href="#g110" x="0"/><use href="#g7" x="12"/><use href="#g51" x="24"/><use href="#g111" x="36"/></svg></div>
<div style="left:124px;top:826px;width:20px;height:16px;border:1px solid #808080;background:transparent;"></div>
<div class="t" style="left:126px;top:827px;color:#a0a0a0;font-size:13px;letter-spacing:-0.5px;">F2</div>
<div class="t" style="left:147px;top:828px;color:#909090;"><svg class="g" width="48" height="10" viewBox="0 2 48 10"><text class="h">編輯文字</text><use href="#g2" x="0"/><use href="#g3" x="12"/><use href="#g112" x="24"/><use href="#g113" x="36"/></svg></div>
<div style="left:243px;top:826px;width:20px;height:16px;border:1px solid #808080;background:transparent;"></div>
<div class="t" style="left:245px;top:827px;color:#a0a0a0;font-size:13px;letter-spacing:-0.5px;">F3</div>
<div style="left:362px;top:826px;width:20px;height:16px;border:1px solid #808080;background:transparent;"></div>
<div class="t" style="left:364px;top:827px;color:#a0a0a0;font-size:13px;letter-spacing:-0.5px;">F4</div>
<div style="left:481px;top:826px;width:20px;height:16px;border:1px solid #808080;background:#f8f8f6;"></div>
<div class="t" style="left:483px;top:827px;color:#505050;font-size:13px;letter-spacing:-0.5px;">F5</div>
<div class="t" style="left:504px;top:828px;color:#000;"><svg class="g" width="24" height="10" viewBox="0 2 24 10"><text class="h">下個</text><use href="#g114" x="0"/><use href="#g115" x="12"/></svg> Parts</div>
<div style="left:600px;top:826px;width:20px;height:16px;border:1px solid #808080;background:transparent;"></div>
<div class="t" style="left:602px;top:827px;color:#a0a0a0;font-size:13px;letter-spacing:-0.5px;">F6</div>
<div class="t" style="left:623px;top:828px;color:#909090;"><svg class="g" width="24" height="10" viewBox="0 2 24 10"><text class="h">上個</text><use href="#g116" x="0"/><use href="#g115" x="12"/></svg> Parts</div>
<div style="left:719px;top:826px;width:20px;height:16px;border:1px solid #808080;background:#f8f8f6;"></div>
<div class="t" style="left:721px;top:827px;color:#505050;font-size:13px;letter-spacing:-0.5px;">F7</div>
<div class="t" style="left:742px;top:828px;color:#000;"><svg class="g" width="48" height="10" viewBox="0 2 48 10"><text class="h">下個繪圖</text><use href="#g114" x="0"/><use href="#g115" x="12"/><use href="#g10" x="24"/><use href="#g11" x="36"/></svg></div>
<div style="left:838px;top:826px;width:20px;height:16px;border:1px solid #808080;background:transparent;"></div>
<div class="t" style="left:840px;top:827px;color:#a0a0a0;font-size:13px;letter-spacing:-0.5px;">F8</div>
<div class="t" style="left:861px;top:828px;color:#909090;"><svg class="g" width="24" height="10" viewBox="0 2 24 10"><text class="h">上個</text><use href="#g116" x="0"/><use href="#g115" x="12"/></svg></div>
<div style="left:957px;top:826px;width:20px;height:16px;border:1px solid #808080;background:transparent;"></div>
<div class="t" style="left:959px;top:827px;color:#a0a0a0;font-size:13px;letter-spacing:-0.5px;">F9</div>
<div class="t" style="left:980px;top:828px;color:#909090;"><svg class="g" width="48" height="10" viewBox="0 2 48 10"><text class="h">改變屬性</text><use href="#g99" x="0"/><use href="#g100" x="12"/><use href="#g102" x="24"/><use href="#g103" x="36"/></svg></div>
<div style="left:1076px;top:826px;width:26px;height:16px;border:1px solid #808080;background:#f8f8f6;"></div>
<div class="t" style="left:1078px;top:827px;color:#505050;font-size:13px;letter-spacing:-0.5px;">F10</div>
<div class="t" style="left:1105px;top:828px;color:#000;"><svg class="g" width="24" height="10" viewBox="0 2 24 10"><text class="h">選單</text><use href="#g117" x="0"/><use href="#g33" x="12"/></svg></div>
<div style="left:1195px;top:826px;width:26px;height:16px;border:1px solid #808080;background:#f8f8f6;"></div>
<div class="t" style="left:1197px;top:827px;color:#505050;font-size:13px;letter-spacing:-0.5px;">F11</div>
<div class="t" style="left:1224px;top:828px;color:#000;"><svg class="g" width="48" height="10" viewBox="0 2 48 10"><text class="h">整個畫面</text><use href="#g118" x="0"/><use href="#g115" x="12"/><use href="#g12" x="24"/><use href="#g13" x="36"/></svg></div>
<div style="left:1314px;top:826px;width:26px;height:16px;border:1px solid #808080;background:#f8f8f6;"></div>
<div class="t" style="left:1316px;top:827px;color:#505050;font-size:13px;letter-spacing:-0.5px;">F12</div>
<div class="t" style="left:1343px;top:828px;color:#000;"><svg class="g" width="24" height="10" viewBox="0 2 24 10"><text class="h">模擬</text><use href="#g119" x="0"/><use href="#g120" x="12"/></svg></div>
<div style="left:1436px;top:826px;width:1px;height:16px;background:#808080;"></div>
<div style="left:0px;top:847px;width:1440px;height:27px;background:#d4d0c8;border-top:1px solid #fff;"></div>
<div style="left:0px;top:849px;width:1270px;height:21px;background:#d4d0c8;border-top:1px solid #808080;border-left:1px solid #808080;border-right:1px solid #fff;border-bottom:1px solid #fff;box-shadow:inset 1px 1px 0 #404040;box-shadow:none;"></div>
<div style="left:1272px;top:849px;width:96px;height:21px;background:#d4d0c8;border-top:1px solid #808080;border-left:1px solid #808080;border-right:1px solid #fff;border-bottom:1px solid #fff;box-shadow:inset 1px 1px 0 #404040;box-shadow:none;"></div>
<div style="left:1370px;top:849px;width:70px;height:21px;background:#d4d0c8;border-top:1px solid #808080;border-left:1px solid #808080;border-right:1px solid #fff;border-bottom:1px solid #fff;box-shadow:inset 1px 1px 0 #404040;box-shadow:none;"></div>
<div class="t" style="left:1278px;top:850px;font-size:16px;line-height:16px;">+</div>
<div class="t" style="left:1296px;top:853px;font-size:10px;">----,----</div>
<div class="t" style="left:1373px;top:853px;font-size:11.5px;letter-spacing:-0.3px;color:#202020;">AST-3501C</div>
</body></html>
